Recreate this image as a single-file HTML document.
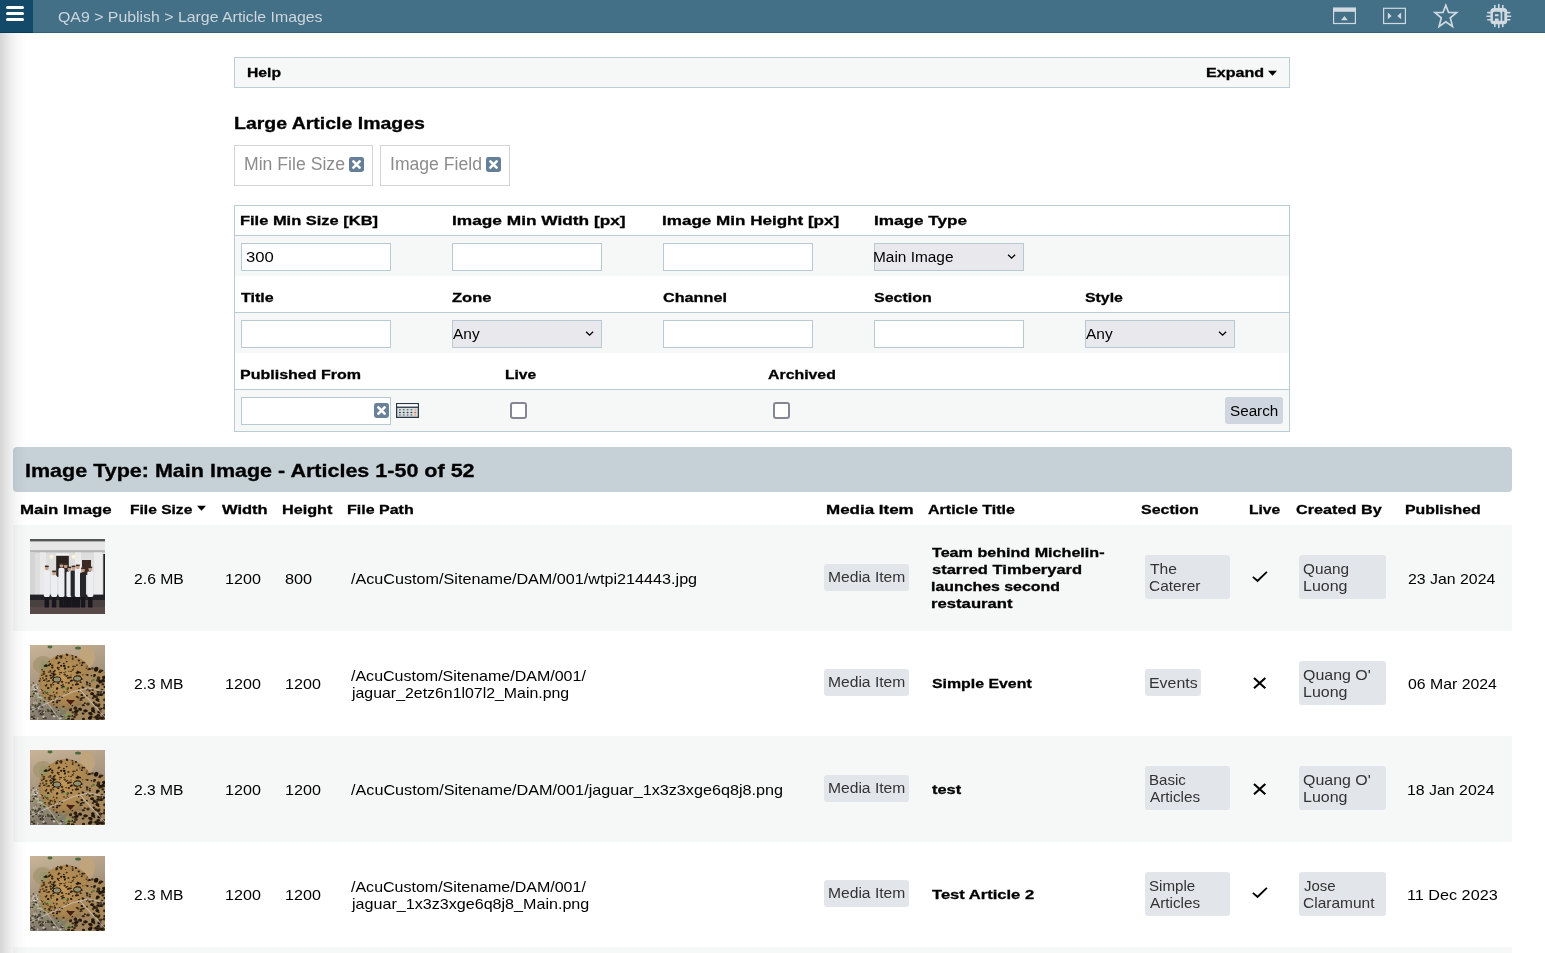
<!DOCTYPE html>
<html><head><meta charset="utf-8"><style>
html,body{margin:0;padding:0;}
body{width:1545px;height:953px;overflow:hidden;position:relative;background:#fff;font-family:"Liberation Sans", sans-serif;}
.t{position:absolute;white-space:nowrap;font-family:"Liberation Sans", sans-serif;transform-origin:0 0;}
</style></head><body>
<svg width="0" height="0" style="position:absolute"><defs><symbol id="leo" viewBox="0 0 75 75"><defs><filter id="lb0" x="-5%" y="-5%" width="110%" height="110%"><feGaussianBlur stdDeviation="0.7"/></filter><linearGradient id="bg0" x1="0" y1="0" x2="0.3" y2="1"><stop offset="0" stop-color="#cbb699"/><stop offset="0.5" stop-color="#a99780"/><stop offset="1" stop-color="#7c7468"/></linearGradient><radialGradient id="lg0" cx="0.45" cy="0.42" r="0.6"><stop offset="0" stop-color="#c09658"/><stop offset="0.75" stop-color="#a98550"/><stop offset="1" stop-color="#8f7552"/></radialGradient></defs><g filter="url(#lb0)"><rect x="-2" y="-2" width="79" height="79" fill="url(#bg0)"/><ellipse cx="13" cy="20" rx="10" ry="9" fill="#a89874"/><ellipse cx="57" cy="12" rx="8" ry="11" fill="#bfa47c"/><ellipse cx="36" cy="37" rx="27" ry="28" fill="url(#lg0)"/><ellipse cx="66" cy="52" rx="15" ry="30" fill="#a98a5c"/><ellipse cx="55" cy="70" rx="20" ry="10" fill="#a0855e"/><ellipse cx="14" cy="21" rx="5" ry="5" fill="#8e9668" opacity="0.55"/><ellipse cx="33.9" cy="42.0" rx="1.25" ry="1.00" fill="#1e140a" opacity="0.84"/><ellipse cx="38.4" cy="47.2" rx="0.67" ry="0.53" fill="#1e140a" opacity="0.79"/><ellipse cx="7.6" cy="58.9" rx="1.48" ry="1.19" fill="#c8c0b0" opacity="0.85"/><ellipse cx="7.4" cy="61.2" rx="0.74" ry="0.59" fill="#2e281e" opacity="0.85"/><ellipse cx="3.1" cy="67.1" rx="0.89" ry="0.71" fill="#6f8a52" opacity="0.85"/><ellipse cx="2.8" cy="66.5" rx="1.05" ry="0.84" fill="#3a3428" opacity="0.85"/><ellipse cx="34.3" cy="20.9" rx="1.30" ry="1.04" fill="#1e140a" opacity="1.00"/><ellipse cx="63.0" cy="53.1" rx="1.35" ry="1.08" fill="#1e140a" opacity="0.77"/><ellipse cx="57.5" cy="30.0" rx="1.19" ry="0.95" fill="#1e140a" opacity="0.82"/><ellipse cx="71.9" cy="63.5" rx="1.00" ry="0.80" fill="#1e140a" opacity="0.76"/><ellipse cx="68.3" cy="35.2" rx="2.08" ry="1.66" fill="#1e140a" opacity="0.82"/><ellipse cx="6.6" cy="46.3" rx="0.68" ry="0.54" fill="#2e281e" opacity="0.85"/><ellipse cx="3.5" cy="46.8" rx="1.43" ry="1.14" fill="#d8d2c8" opacity="0.85"/><ellipse cx="3.2" cy="60.0" rx="1.00" ry="0.80" fill="#6f8a52" opacity="0.85"/><ellipse cx="6.4" cy="60.9" rx="0.98" ry="0.78" fill="#8aa060" opacity="0.85"/><ellipse cx="16.0" cy="20.2" rx="1.28" ry="1.02" fill="#1e140a" opacity="0.94"/><ellipse cx="21.7" cy="65.9" rx="1.37" ry="1.10" fill="#3a3428" opacity="0.85"/><ellipse cx="21.0" cy="65.0" rx="1.00" ry="0.80" fill="#2e281e" opacity="0.85"/><ellipse cx="58.0" cy="24.7" rx="0.81" ry="0.65" fill="#1e140a" opacity="0.72"/><ellipse cx="5.7" cy="44.1" rx="0.93" ry="0.75" fill="#c8c0b0" opacity="0.85"/><ellipse cx="5.3" cy="44.1" rx="1.35" ry="1.08" fill="#d8d2c8" opacity="0.85"/><ellipse cx="12.8" cy="67.1" rx="0.77" ry="0.62" fill="#6f8a52" opacity="0.85"/><ellipse cx="12.3" cy="67.7" rx="1.03" ry="0.83" fill="#3a3428" opacity="0.85"/><ellipse cx="1.9" cy="73.0" rx="0.83" ry="0.67" fill="#c8c0b0" opacity="0.85"/><ellipse cx="2.1" cy="70.9" rx="1.25" ry="1.00" fill="#3a3428" opacity="0.85"/><ellipse cx="9.5" cy="35.9" rx="1.06" ry="0.85" fill="#1e140a" opacity="0.88"/><ellipse cx="68.6" cy="56.2" rx="1.08" ry="0.86" fill="#1e140a" opacity="0.82"/><ellipse cx="21.1" cy="39.8" rx="1.28" ry="1.02" fill="#1e140a" opacity="0.73"/><ellipse cx="10.4" cy="33.8" rx="0.83" ry="0.67" fill="#1e140a" opacity="0.92"/><ellipse cx="39.1" cy="71.0" rx="1.65" ry="1.32" fill="#1e140a" opacity="0.98"/><ellipse cx="35.6" cy="26.8" rx="0.82" ry="0.65" fill="#1e140a" opacity="0.71"/><ellipse cx="34.0" cy="27.6" rx="0.63" ry="0.50" fill="#1e140a" opacity="0.98"/><ellipse cx="72.3" cy="25.6" rx="1.09" ry="0.87" fill="#1e140a" opacity="0.84"/><ellipse cx="7.6" cy="62.4" rx="1.05" ry="0.84" fill="#2e281e" opacity="0.85"/><ellipse cx="6.3" cy="63.8" rx="1.12" ry="0.90" fill="#3a3428" opacity="0.85"/><ellipse cx="8.0" cy="49.5" rx="1.26" ry="1.00" fill="#8aa060" opacity="0.85"/><ellipse cx="7.8" cy="48.7" rx="1.01" ry="0.81" fill="#c8c0b0" opacity="0.85"/><ellipse cx="45.1" cy="36.1" rx="0.76" ry="0.61" fill="#1e140a" opacity="0.91"/><ellipse cx="37.3" cy="46.1" rx="0.78" ry="0.62" fill="#1e140a" opacity="0.70"/><ellipse cx="22.6" cy="50.9" rx="0.74" ry="0.59" fill="#1e140a" opacity="0.75"/><ellipse cx="67.9" cy="49.5" rx="1.49" ry="1.19" fill="#1e140a" opacity="0.97"/><ellipse cx="24.5" cy="49.9" rx="0.74" ry="0.59" fill="#1e140a" opacity="0.83"/><ellipse cx="60.4" cy="68.6" rx="1.97" ry="1.57" fill="#1e140a" opacity="0.82"/><ellipse cx="43.7" cy="23.7" rx="0.70" ry="0.56" fill="#1e140a" opacity="0.85"/><ellipse cx="62.8" cy="63.7" rx="1.78" ry="1.43" fill="#1e140a" opacity="0.99"/><ellipse cx="33.8" cy="20.6" rx="0.75" ry="0.60" fill="#1e140a" opacity="0.82"/><ellipse cx="46.9" cy="37.0" rx="0.82" ry="0.66" fill="#1e140a" opacity="0.95"/><ellipse cx="73.7" cy="33.9" rx="1.08" ry="0.87" fill="#1e140a" opacity="0.71"/><ellipse cx="53.1" cy="42.8" rx="0.82" ry="0.65" fill="#1e140a" opacity="0.94"/><ellipse cx="47.2" cy="33.5" rx="1.04" ry="0.83" fill="#1e140a" opacity="0.90"/><ellipse cx="60.6" cy="71.9" rx="1.75" ry="1.40" fill="#1e140a" opacity="0.76"/><ellipse cx="35.6" cy="13.4" rx="0.61" ry="0.49" fill="#1e140a" opacity="0.84"/><ellipse cx="20.4" cy="25.9" rx="1.09" ry="0.87" fill="#1e140a" opacity="0.86"/><ellipse cx="59.4" cy="68.0" rx="1.10" ry="0.88" fill="#1e140a" opacity="0.98"/><ellipse cx="34.0" cy="46.9" rx="0.86" ry="0.69" fill="#1e140a" opacity="0.87"/><ellipse cx="65.9" cy="59.8" rx="2.04" ry="1.63" fill="#1e140a" opacity="0.84"/><ellipse cx="48.8" cy="15.4" rx="1.11" ry="0.88" fill="#1e140a" opacity="0.95"/><ellipse cx="67.5" cy="73.5" rx="2.08" ry="1.66" fill="#1e140a" opacity="0.86"/><ellipse cx="59.3" cy="24.0" rx="1.24" ry="0.99" fill="#1e140a" opacity="0.96"/><ellipse cx="33.1" cy="41.3" rx="1.14" ry="0.91" fill="#1e140a" opacity="0.85"/><ellipse cx="0.4" cy="61.9" rx="0.76" ry="0.60" fill="#2e281e" opacity="0.85"/><ellipse cx="2.9" cy="62.3" rx="1.02" ry="0.82" fill="#c8c0b0" opacity="0.85"/><ellipse cx="70.9" cy="36.9" rx="2.04" ry="1.64" fill="#1e140a" opacity="0.73"/><ellipse cx="16.6" cy="39.5" rx="0.80" ry="0.64" fill="#1e140a" opacity="0.92"/><ellipse cx="47.9" cy="39.2" rx="1.19" ry="0.95" fill="#1e140a" opacity="0.87"/><ellipse cx="23.4" cy="28.6" rx="1.19" ry="0.95" fill="#1e140a" opacity="0.97"/><ellipse cx="17.5" cy="63.9" rx="1.12" ry="0.89" fill="#6f8a52" opacity="0.85"/><ellipse cx="15.3" cy="62.3" rx="0.60" ry="0.48" fill="#8aa060" opacity="0.85"/><ellipse cx="2.1" cy="72.3" rx="1.32" ry="1.06" fill="#3a3428" opacity="0.85"/><ellipse cx="2.0" cy="73.5" rx="0.66" ry="0.53" fill="#c8c0b0" opacity="0.85"/><ellipse cx="32.7" cy="70.8" rx="1.03" ry="0.82" fill="#d8d2c8" opacity="0.85"/><ellipse cx="30.4" cy="73.4" rx="1.44" ry="1.15" fill="#c8c0b0" opacity="0.85"/><ellipse cx="19.5" cy="52.7" rx="1.28" ry="1.03" fill="#1e140a" opacity="0.71"/><ellipse cx="21.3" cy="54.3" rx="0.77" ry="0.62" fill="#1e140a" opacity="0.85"/><ellipse cx="37.5" cy="43.7" rx="1.20" ry="0.96" fill="#1e140a" opacity="0.89"/><ellipse cx="53.8" cy="52.6" rx="1.22" ry="0.97" fill="#1e140a" opacity="0.71"/><ellipse cx="40.4" cy="64.8" rx="1.59" ry="1.27" fill="#1e140a" opacity="0.77"/><ellipse cx="16.2" cy="40.7" rx="1.01" ry="0.81" fill="#1e140a" opacity="0.74"/><ellipse cx="68.6" cy="47.1" rx="1.38" ry="1.11" fill="#1e140a" opacity="0.75"/><ellipse cx="45.2" cy="66.8" rx="1.21" ry="0.97" fill="#1e140a" opacity="0.93"/><ellipse cx="32.8" cy="71.4" rx="0.78" ry="0.62" fill="#2e281e" opacity="0.85"/><ellipse cx="31.0" cy="70.9" rx="0.92" ry="0.74" fill="#2e281e" opacity="0.85"/><ellipse cx="56.9" cy="37.7" rx="1.08" ry="0.86" fill="#1e140a" opacity="0.76"/><ellipse cx="2.9" cy="41.7" rx="0.73" ry="0.59" fill="#d8d2c8" opacity="0.85"/><ellipse cx="1.3" cy="40.1" rx="0.74" ry="0.59" fill="#5a5040" opacity="0.85"/><ellipse cx="4.5" cy="72.4" rx="0.89" ry="0.72" fill="#c8c0b0" opacity="0.85"/><ellipse cx="4.4" cy="70.8" rx="0.79" ry="0.63" fill="#2e281e" opacity="0.85"/><ellipse cx="2.4" cy="51.3" rx="1.01" ry="0.81" fill="#2e281e" opacity="0.85"/><ellipse cx="0.6" cy="51.4" rx="0.75" ry="0.60" fill="#2e281e" opacity="0.85"/><ellipse cx="63.1" cy="65.7" rx="2.00" ry="1.60" fill="#1e140a" opacity="0.98"/><ellipse cx="42.7" cy="14.3" rx="1.01" ry="0.81" fill="#1e140a" opacity="0.80"/><ellipse cx="57.2" cy="21.0" rx="0.68" ry="0.55" fill="#1e140a" opacity="0.92"/><ellipse cx="10.5" cy="69.4" rx="1.08" ry="0.87" fill="#2e281e" opacity="0.85"/><ellipse cx="13.1" cy="71.1" rx="0.97" ry="0.77" fill="#d8d2c8" opacity="0.85"/><ellipse cx="26.7" cy="47.9" rx="1.04" ry="0.83" fill="#1e140a" opacity="0.77"/><ellipse cx="70.9" cy="50.0" rx="1.37" ry="1.10" fill="#1e140a" opacity="0.90"/><ellipse cx="42.7" cy="40.0" rx="0.87" ry="0.70" fill="#1e140a" opacity="1.00"/><ellipse cx="48.2" cy="52.6" rx="1.29" ry="1.03" fill="#1e140a" opacity="0.71"/><ellipse cx="14.7" cy="28.2" rx="0.67" ry="0.54" fill="#1e140a" opacity="0.78"/><ellipse cx="67.9" cy="41.3" rx="1.56" ry="1.25" fill="#1e140a" opacity="0.99"/><ellipse cx="42.6" cy="74.6" rx="1.70" ry="1.36" fill="#1e140a" opacity="0.94"/><ellipse cx="6.8" cy="43.0" rx="1.44" ry="1.15" fill="#d8d2c8" opacity="0.85"/><ellipse cx="5.3" cy="46.7" rx="1.37" ry="1.10" fill="#2e281e" opacity="0.85"/><ellipse cx="32.2" cy="37.1" rx="0.80" ry="0.64" fill="#1e140a" opacity="0.82"/><ellipse cx="23.4" cy="39.8" rx="0.94" ry="0.75" fill="#1e140a" opacity="0.78"/><ellipse cx="69.7" cy="49.8" rx="1.82" ry="1.46" fill="#1e140a" opacity="0.71"/><ellipse cx="57.9" cy="43.9" rx="1.04" ry="0.83" fill="#1e140a" opacity="0.82"/><ellipse cx="23.6" cy="29.8" rx="1.01" ry="0.81" fill="#1e140a" opacity="0.92"/><ellipse cx="23.9" cy="59.8" rx="0.76" ry="0.61" fill="#1e140a" opacity="0.92"/><ellipse cx="18.8" cy="56.7" rx="0.63" ry="0.51" fill="#1e140a" opacity="0.73"/><ellipse cx="60.8" cy="68.2" rx="1.16" ry="0.93" fill="#1e140a" opacity="0.99"/><ellipse cx="18.4" cy="53.0" rx="0.64" ry="0.51" fill="#1e140a" opacity="0.83"/><ellipse cx="8.3" cy="63.2" rx="0.93" ry="0.74" fill="#d8d2c8" opacity="0.85"/><ellipse cx="9.5" cy="64.4" rx="0.84" ry="0.67" fill="#8aa060" opacity="0.85"/><ellipse cx="27.3" cy="55.8" rx="1.17" ry="0.94" fill="#1e140a" opacity="0.74"/><ellipse cx="36.1" cy="37.7" rx="0.82" ry="0.65" fill="#1e140a" opacity="0.85"/><ellipse cx="14.3" cy="20.9" rx="0.77" ry="0.61" fill="#1e140a" opacity="0.99"/><ellipse cx="51.2" cy="47.1" rx="0.61" ry="0.49" fill="#1e140a" opacity="0.78"/><ellipse cx="16.7" cy="20.9" rx="1.13" ry="0.90" fill="#1e140a" opacity="0.97"/><ellipse cx="73.6" cy="36.3" rx="1.39" ry="1.11" fill="#1e140a" opacity="0.80"/><ellipse cx="37.1" cy="10.0" rx="1.21" ry="0.97" fill="#1e140a" opacity="0.94"/><ellipse cx="33.5" cy="61.7" rx="1.14" ry="0.91" fill="#1e140a" opacity="0.83"/><ellipse cx="56.0" cy="29.3" rx="0.71" ry="0.56" fill="#1e140a" opacity="0.75"/><ellipse cx="62.7" cy="44.7" rx="1.32" ry="1.06" fill="#1e140a" opacity="0.93"/><ellipse cx="49.0" cy="43.5" rx="0.92" ry="0.74" fill="#1e140a" opacity="0.80"/><ellipse cx="40.8" cy="32.4" rx="1.00" ry="0.80" fill="#1e140a" opacity="0.94"/><ellipse cx="23.7" cy="69.1" rx="1.05" ry="0.84" fill="#2e281e" opacity="0.85"/><ellipse cx="22.4" cy="66.9" rx="0.92" ry="0.74" fill="#2e281e" opacity="0.85"/><ellipse cx="53.2" cy="42.7" rx="1.24" ry="0.99" fill="#1e140a" opacity="0.98"/><ellipse cx="68.5" cy="32.8" rx="1.88" ry="1.51" fill="#1e140a" opacity="0.79"/><ellipse cx="23.8" cy="30.0" rx="1.25" ry="1.00" fill="#1e140a" opacity="0.97"/><ellipse cx="18.6" cy="27.1" rx="0.86" ry="0.68" fill="#1e140a" opacity="0.81"/><ellipse cx="29.7" cy="29.1" rx="0.74" ry="0.59" fill="#1e140a" opacity="0.87"/><ellipse cx="59.8" cy="40.5" rx="1.19" ry="0.95" fill="#1e140a" opacity="0.87"/><ellipse cx="14.8" cy="56.0" rx="0.62" ry="0.50" fill="#2e281e" opacity="0.85"/><ellipse cx="13.4" cy="57.2" rx="1.47" ry="1.18" fill="#8aa060" opacity="0.85"/><ellipse cx="6.0" cy="39.3" rx="0.67" ry="0.54" fill="#3a3428" opacity="0.85"/><ellipse cx="6.4" cy="39.4" rx="1.17" ry="0.94" fill="#d8d2c8" opacity="0.85"/><ellipse cx="7.0" cy="62.1" rx="1.04" ry="0.83" fill="#2e281e" opacity="0.85"/><ellipse cx="8.4" cy="60.8" rx="0.90" ry="0.72" fill="#2e281e" opacity="0.85"/><ellipse cx="50.4" cy="37.0" rx="0.98" ry="0.78" fill="#1e140a" opacity="0.92"/><ellipse cx="53.1" cy="68.6" rx="1.45" ry="1.16" fill="#1e140a" opacity="0.95"/><ellipse cx="50.0" cy="64.0" rx="1.89" ry="1.51" fill="#1e140a" opacity="0.95"/><ellipse cx="66.6" cy="71.8" rx="1.70" ry="1.36" fill="#1e140a" opacity="0.86"/><ellipse cx="53.3" cy="60.2" rx="1.46" ry="1.17" fill="#1e140a" opacity="0.83"/><ellipse cx="12.9" cy="55.1" rx="0.75" ry="0.60" fill="#6f8a52" opacity="0.85"/><ellipse cx="10.5" cy="55.7" rx="0.85" ry="0.68" fill="#2e281e" opacity="0.85"/><ellipse cx="13.3" cy="70.0" rx="0.62" ry="0.49" fill="#c8c0b0" opacity="0.85"/><ellipse cx="13.3" cy="67.1" rx="0.70" ry="0.56" fill="#d8d2c8" opacity="0.85"/><ellipse cx="26.9" cy="44.1" rx="1.02" ry="0.82" fill="#1e140a" opacity="0.84"/><ellipse cx="38.1" cy="33.1" rx="1.23" ry="0.98" fill="#1e140a" opacity="0.82"/><ellipse cx="68.3" cy="70.3" rx="1.69" ry="1.35" fill="#1e140a" opacity="0.98"/><ellipse cx="41.3" cy="64.0" rx="0.94" ry="0.75" fill="#1e140a" opacity="0.82"/><ellipse cx="71.7" cy="49.5" rx="1.85" ry="1.48" fill="#1e140a" opacity="0.73"/><ellipse cx="64.7" cy="30.0" rx="1.24" ry="0.99" fill="#1e140a" opacity="0.74"/><ellipse cx="59.9" cy="73.2" rx="1.87" ry="1.50" fill="#1e140a" opacity="0.93"/><ellipse cx="69.3" cy="66.9" rx="1.96" ry="1.57" fill="#1e140a" opacity="0.97"/><ellipse cx="33.8" cy="18.5" rx="0.90" ry="0.72" fill="#1e140a" opacity="0.96"/><ellipse cx="68.1" cy="60.8" rx="1.14" ry="0.92" fill="#1e140a" opacity="0.92"/><ellipse cx="46.5" cy="38.7" rx="0.64" ry="0.51" fill="#1e140a" opacity="0.87"/><ellipse cx="46.1" cy="39.6" rx="1.22" ry="0.98" fill="#1e140a" opacity="0.91"/><ellipse cx="6.4" cy="56.2" rx="0.62" ry="0.49" fill="#6f8a52" opacity="0.85"/><ellipse cx="5.9" cy="57.8" rx="0.68" ry="0.55" fill="#c8c0b0" opacity="0.85"/><ellipse cx="15.6" cy="40.8" rx="0.97" ry="0.77" fill="#1e140a" opacity="0.75"/><ellipse cx="62.4" cy="23.4" rx="1.34" ry="1.07" fill="#1e140a" opacity="0.72"/><ellipse cx="22.9" cy="35.0" rx="1.10" ry="0.88" fill="#1e140a" opacity="0.81"/><ellipse cx="29.6" cy="34.6" rx="1.28" ry="1.02" fill="#1e140a" opacity="0.95"/><ellipse cx="28.3" cy="53.3" rx="0.77" ry="0.61" fill="#1e140a" opacity="0.87"/><ellipse cx="74.4" cy="60.0" rx="1.23" ry="0.98" fill="#1e140a" opacity="0.88"/><ellipse cx="21.8" cy="28.2" rx="0.98" ry="0.78" fill="#1e140a" opacity="0.79"/><ellipse cx="25.3" cy="29.4" rx="1.07" ry="0.85" fill="#1e140a" opacity="0.78"/><ellipse cx="14.3" cy="56.6" rx="1.11" ry="0.89" fill="#2e281e" opacity="0.85"/><ellipse cx="14.8" cy="54.4" rx="0.69" ry="0.55" fill="#3a3428" opacity="0.85"/><ellipse cx="8.6" cy="46.1" rx="0.63" ry="0.51" fill="#c8c0b0" opacity="0.85"/><ellipse cx="10.2" cy="45.6" rx="0.80" ry="0.64" fill="#d8d2c8" opacity="0.85"/><ellipse cx="74.1" cy="32.5" rx="1.85" ry="1.48" fill="#1e140a" opacity="0.80"/><ellipse cx="61.7" cy="69.5" rx="1.15" ry="0.92" fill="#1e140a" opacity="0.76"/><ellipse cx="11.0" cy="53.5" rx="1.16" ry="0.93" fill="#8aa060" opacity="0.85"/><ellipse cx="11.6" cy="51.1" rx="1.31" ry="1.05" fill="#6f8a52" opacity="0.85"/><ellipse cx="24.8" cy="25.7" rx="1.06" ry="0.84" fill="#1e140a" opacity="0.73"/><ellipse cx="28.3" cy="38.2" rx="1.15" ry="0.92" fill="#1e140a" opacity="0.95"/><ellipse cx="45.9" cy="11.9" rx="1.14" ry="0.91" fill="#1e140a" opacity="0.97"/><ellipse cx="41.1" cy="26.4" rx="0.95" ry="0.76" fill="#1e140a" opacity="0.74"/><ellipse cx="53.5" cy="74.0" rx="1.57" ry="1.25" fill="#1e140a" opacity="0.91"/><ellipse cx="70.9" cy="47.0" rx="1.22" ry="0.97" fill="#1e140a" opacity="0.72"/><ellipse cx="18.3" cy="43.2" rx="1.09" ry="0.87" fill="#1e140a" opacity="0.80"/><ellipse cx="69.7" cy="27.1" rx="1.51" ry="1.21" fill="#1e140a" opacity="0.74"/><ellipse cx="67.8" cy="40.8" rx="1.62" ry="1.29" fill="#1e140a" opacity="0.87"/><ellipse cx="21.8" cy="69.5" rx="1.14" ry="0.91" fill="#3a3428" opacity="0.85"/><ellipse cx="21.6" cy="66.2" rx="1.22" ry="0.97" fill="#2e281e" opacity="0.85"/><ellipse cx="18.1" cy="43.0" rx="1.18" ry="0.95" fill="#1e140a" opacity="0.76"/><ellipse cx="74.0" cy="70.5" rx="1.72" ry="1.38" fill="#1e140a" opacity="0.79"/><ellipse cx="50.3" cy="55.3" rx="0.87" ry="0.69" fill="#1e140a" opacity="0.88"/><ellipse cx="15.0" cy="35.1" rx="0.70" ry="0.56" fill="#1e140a" opacity="0.82"/><ellipse cx="42.7" cy="13.0" rx="0.96" ry="0.77" fill="#1e140a" opacity="0.78"/><ellipse cx="42.6" cy="24.9" rx="1.05" ry="0.84" fill="#1e140a" opacity="0.71"/><ellipse cx="71.9" cy="45.0" rx="1.52" ry="1.21" fill="#1e140a" opacity="0.82"/><ellipse cx="46.8" cy="51.7" rx="1.13" ry="0.90" fill="#1e140a" opacity="0.85"/><ellipse cx="74.6" cy="62.9" rx="1.94" ry="1.55" fill="#1e140a" opacity="0.82"/><ellipse cx="32.5" cy="42.4" rx="1.23" ry="0.99" fill="#1e140a" opacity="0.86"/><ellipse cx="39.4" cy="32.4" rx="1.23" ry="0.99" fill="#1e140a" opacity="0.80"/><ellipse cx="5.7" cy="55.3" rx="1.14" ry="0.91" fill="#5a5040" opacity="0.85"/><ellipse cx="5.6" cy="55.9" rx="0.82" ry="0.66" fill="#c8c0b0" opacity="0.85"/><ellipse cx="20.1" cy="65.4" rx="0.69" ry="0.56" fill="#6f8a52" opacity="0.85"/><ellipse cx="18.4" cy="66.1" rx="1.45" ry="1.16" fill="#3a3428" opacity="0.85"/><ellipse cx="74.9" cy="54.8" rx="1.96" ry="1.57" fill="#1e140a" opacity="0.81"/><ellipse cx="41.0" cy="42.3" rx="0.71" ry="0.57" fill="#1e140a" opacity="0.89"/><ellipse cx="3.9" cy="40.5" rx="1.12" ry="0.89" fill="#c8c0b0" opacity="0.85"/><ellipse cx="3.4" cy="37.9" rx="0.87" ry="0.70" fill="#2e281e" opacity="0.85"/><ellipse cx="12.9" cy="33.1" rx="0.92" ry="0.73" fill="#1e140a" opacity="0.86"/><ellipse cx="9.5" cy="51.1" rx="1.01" ry="0.81" fill="#2e281e" opacity="0.85"/><ellipse cx="9.8" cy="51.9" rx="1.44" ry="1.15" fill="#c8c0b0" opacity="0.85"/><ellipse cx="64.4" cy="51.9" rx="1.06" ry="0.85" fill="#1e140a" opacity="0.79"/><ellipse cx="64.4" cy="67.4" rx="1.02" ry="0.81" fill="#1e140a" opacity="0.89"/><ellipse cx="52.3" cy="42.0" rx="0.97" ry="0.78" fill="#1e140a" opacity="0.77"/><ellipse cx="71.2" cy="73.2" rx="1.72" ry="1.37" fill="#1e140a" opacity="0.79"/><ellipse cx="61.3" cy="72.1" rx="1.30" ry="1.04" fill="#1e140a" opacity="0.83"/><ellipse cx="65.9" cy="25.1" rx="2.05" ry="1.64" fill="#1e140a" opacity="0.93"/><ellipse cx="31.1" cy="12.7" rx="1.20" ry="0.96" fill="#1e140a" opacity="0.74"/><ellipse cx="51.8" cy="20.2" rx="1.10" ry="0.88" fill="#1e140a" opacity="0.85"/><ellipse cx="22.2" cy="20.5" rx="1.16" ry="0.93" fill="#1e140a" opacity="0.86"/><ellipse cx="10.6" cy="40.3" rx="0.76" ry="0.61" fill="#6f8a52" opacity="0.85"/><ellipse cx="7.8" cy="39.3" rx="0.68" ry="0.54" fill="#3a3428" opacity="0.85"/><ellipse cx="33.0" cy="39.6" rx="0.97" ry="0.78" fill="#1e140a" opacity="0.71"/><ellipse cx="45.0" cy="21.3" rx="0.78" ry="0.62" fill="#1e140a" opacity="0.94"/><ellipse cx="20.9" cy="41.1" rx="0.73" ry="0.58" fill="#1e140a" opacity="0.97"/><ellipse cx="69.7" cy="37.5" rx="1.20" ry="0.96" fill="#1e140a" opacity="0.87"/><ellipse cx="48.4" cy="27.0" rx="1.06" ry="0.85" fill="#1e140a" opacity="0.93"/><ellipse cx="38.8" cy="37.9" rx="1.19" ry="0.95" fill="#1e140a" opacity="0.91"/><ellipse cx="39.0" cy="71.4" rx="1.19" ry="0.95" fill="#1e140a" opacity="0.93"/><ellipse cx="12.4" cy="45.6" rx="0.76" ry="0.61" fill="#1e140a" opacity="0.83"/><ellipse cx="58.0" cy="59.0" rx="1.87" ry="1.50" fill="#1e140a" opacity="0.77"/><ellipse cx="36.7" cy="16.6" rx="1.01" ry="0.80" fill="#1e140a" opacity="0.85"/><ellipse cx="3.5" cy="45.1" rx="1.39" ry="1.11" fill="#d8d2c8" opacity="0.85"/><ellipse cx="2.0" cy="45.2" rx="1.15" ry="0.92" fill="#8aa060" opacity="0.85"/><ellipse cx="37.8" cy="54.2" rx="0.62" ry="0.50" fill="#1e140a" opacity="0.73"/><ellipse cx="13.4" cy="48.0" rx="1.01" ry="0.80" fill="#1e140a" opacity="0.92"/><ellipse cx="31.9" cy="52.2" rx="1.12" ry="0.89" fill="#1e140a" opacity="0.93"/><ellipse cx="57.4" cy="37.4" rx="1.06" ry="0.84" fill="#1e140a" opacity="0.85"/><ellipse cx="28.4" cy="18.6" rx="0.95" ry="0.76" fill="#1e140a" opacity="0.90"/><ellipse cx="44.7" cy="34.1" rx="0.82" ry="0.66" fill="#1e140a" opacity="0.84"/><ellipse cx="52.4" cy="52.8" rx="1.27" ry="1.02" fill="#1e140a" opacity="0.74"/><ellipse cx="56.7" cy="45.1" rx="0.69" ry="0.56" fill="#1e140a" opacity="0.92"/><ellipse cx="39.1" cy="73.9" rx="1.00" ry="0.80" fill="#1e140a" opacity="0.82"/><ellipse cx="41.7" cy="35.4" rx="1.25" ry="1.00" fill="#1e140a" opacity="0.99"/><ellipse cx="51.0" cy="53.8" rx="1.28" ry="1.03" fill="#1e140a" opacity="0.88"/><ellipse cx="64.2" cy="31.4" rx="1.09" ry="0.88" fill="#1e140a" opacity="0.77"/><ellipse cx="24.9" cy="69.9" rx="0.74" ry="0.60" fill="#2e281e" opacity="0.85"/><ellipse cx="24.1" cy="71.3" rx="1.42" ry="1.14" fill="#d8d2c8" opacity="0.85"/><ellipse cx="34.7" cy="29.5" rx="1.19" ry="0.95" fill="#1e140a" opacity="0.81"/><ellipse cx="26.1" cy="13.8" rx="0.98" ry="0.79" fill="#1e140a" opacity="0.75"/><ellipse cx="35.1" cy="23.1" rx="0.91" ry="0.73" fill="#1e140a" opacity="1.00"/><ellipse cx="50.9" cy="64.7" rx="1.23" ry="0.98" fill="#1e140a" opacity="0.81"/><ellipse cx="4.9" cy="50.9" rx="0.62" ry="0.49" fill="#d8d2c8" opacity="0.85"/><ellipse cx="6.4" cy="51.9" rx="1.11" ry="0.89" fill="#6f8a52" opacity="0.85"/><ellipse cx="20.1" cy="27.1" rx="0.71" ry="0.57" fill="#1e140a" opacity="0.98"/><ellipse cx="27.0" cy="57.4" rx="1.11" ry="0.89" fill="#1e140a" opacity="0.97"/><ellipse cx="66.2" cy="24.4" rx="1.85" ry="1.48" fill="#1e140a" opacity="0.86"/><ellipse cx="11.3" cy="44.7" rx="0.62" ry="0.50" fill="#1e140a" opacity="0.79"/><ellipse cx="31.8" cy="40.8" rx="0.70" ry="0.56" fill="#1e140a" opacity="0.91"/><ellipse cx="19.5" cy="54.4" rx="1.07" ry="0.85" fill="#1e140a" opacity="0.74"/><ellipse cx="15.4" cy="21.0" rx="1.10" ry="0.88" fill="#1e140a" opacity="0.82"/><ellipse cx="27.9" cy="64.1" rx="0.91" ry="0.73" fill="#6f8a52" opacity="0.85"/><ellipse cx="27.5" cy="66.3" rx="1.27" ry="1.02" fill="#c8c0b0" opacity="0.85"/><ellipse cx="42.4" cy="60.7" rx="0.81" ry="0.65" fill="#1e140a" opacity="0.90"/><ellipse cx="51.7" cy="50.0" rx="1.27" ry="1.01" fill="#1e140a" opacity="0.96"/><ellipse cx="17.6" cy="47.4" rx="0.66" ry="0.53" fill="#1e140a" opacity="0.83"/><ellipse cx="28.8" cy="24.6" rx="0.95" ry="0.76" fill="#1e140a" opacity="0.78"/><ellipse cx="11.9" cy="30.2" rx="0.93" ry="0.75" fill="#1e140a" opacity="0.75"/><ellipse cx="49.9" cy="18.0" rx="0.67" ry="0.53" fill="#1e140a" opacity="0.80"/><ellipse cx="31.7" cy="11.3" rx="1.01" ry="0.81" fill="#1e140a" opacity="0.91"/><ellipse cx="29.4" cy="27.3" rx="0.64" ry="0.52" fill="#1e140a" opacity="0.82"/><ellipse cx="43.9" cy="35.2" rx="0.83" ry="0.66" fill="#1e140a" opacity="0.78"/><ellipse cx="66.9" cy="42.4" rx="1.29" ry="1.03" fill="#1e140a" opacity="0.90"/><ellipse cx="14.0" cy="35.2" rx="1.03" ry="0.82" fill="#1e140a" opacity="0.99"/><ellipse cx="27.2" cy="43.2" rx="1.26" ry="1.01" fill="#1e140a" opacity="0.93"/><ellipse cx="31.2" cy="20.7" rx="1.18" ry="0.94" fill="#1e140a" opacity="0.96"/><ellipse cx="26.8" cy="66.8" rx="1.06" ry="0.85" fill="#5a5040" opacity="0.85"/><ellipse cx="28.6" cy="68.1" rx="0.62" ry="0.50" fill="#6f8a52" opacity="0.85"/><ellipse cx="20.2" cy="19.4" rx="0.75" ry="0.60" fill="#1e140a" opacity="0.86"/><ellipse cx="69.5" cy="73.5" rx="1.00" ry="0.80" fill="#1e140a" opacity="0.86"/><ellipse cx="63.7" cy="57.4" rx="1.09" ry="0.87" fill="#1e140a" opacity="0.95"/><ellipse cx="66.3" cy="51.8" rx="1.88" ry="1.50" fill="#1e140a" opacity="0.78"/><ellipse cx="29.7" cy="11.7" rx="0.73" ry="0.59" fill="#1e140a" opacity="0.75"/><ellipse cx="25.0" cy="51.7" rx="1.16" ry="0.93" fill="#1e140a" opacity="0.79"/><ellipse cx="31.1" cy="27.5" rx="1.07" ry="0.85" fill="#1e140a" opacity="0.85"/><ellipse cx="48.5" cy="27.2" rx="1.09" ry="0.88" fill="#1e140a" opacity="0.98"/><ellipse cx="55.3" cy="65.8" rx="2.09" ry="1.67" fill="#1e140a" opacity="0.95"/><ellipse cx="66.4" cy="23.3" rx="1.93" ry="1.55" fill="#1e140a" opacity="0.85"/><ellipse cx="46.6" cy="31.0" rx="0.94" ry="0.75" fill="#1e140a" opacity="0.80"/><ellipse cx="29.8" cy="55.5" rx="1.09" ry="0.87" fill="#1e140a" opacity="0.78"/><ellipse cx="47.6" cy="27.6" rx="1.08" ry="0.86" fill="#1e140a" opacity="0.76"/><ellipse cx="73.8" cy="48.1" rx="1.14" ry="0.91" fill="#1e140a" opacity="0.92"/><ellipse cx="15.1" cy="46.6" rx="0.80" ry="0.64" fill="#1e140a" opacity="0.90"/><ellipse cx="73.0" cy="35.4" rx="1.76" ry="1.41" fill="#1e140a" opacity="0.94"/><ellipse cx="20.3" cy="18.9" rx="1.07" ry="0.85" fill="#1e140a" opacity="0.82"/><ellipse cx="13.3" cy="73.6" rx="0.92" ry="0.74" fill="#3a3428" opacity="0.85"/><ellipse cx="11.4" cy="76.4" rx="1.35" ry="1.08" fill="#c8c0b0" opacity="0.85"/><ellipse cx="33.5" cy="64.1" rx="1.25" ry="1.00" fill="#8aa060" opacity="0.85"/><ellipse cx="34.0" cy="67.2" rx="0.95" ry="0.76" fill="#6f8a52" opacity="0.85"/><ellipse cx="36.6" cy="9.0" rx="0.83" ry="0.66" fill="#1e140a" opacity="0.71"/><ellipse cx="42.4" cy="10.8" rx="1.04" ry="0.83" fill="#1e140a" opacity="0.78"/><ellipse cx="17.1" cy="36.2" rx="0.86" ry="0.68" fill="#1e140a" opacity="0.78"/><ellipse cx="66.9" cy="23.2" rx="1.09" ry="0.87" fill="#1e140a" opacity="0.75"/><ellipse cx="36.3" cy="74.8" rx="1.22" ry="0.98" fill="#1e140a" opacity="0.96"/><ellipse cx="36.3" cy="31.1" rx="1.16" ry="0.93" fill="#1e140a" opacity="0.82"/><ellipse cx="5.0" cy="41.8" rx="0.85" ry="0.68" fill="#5a5040" opacity="0.85"/><ellipse cx="5.8" cy="43.3" rx="1.00" ry="0.80" fill="#2e281e" opacity="0.85"/><ellipse cx="56.5" cy="23.3" rx="0.96" ry="0.77" fill="#1e140a" opacity="0.70"/><ellipse cx="13.8" cy="72.1" rx="1.33" ry="1.06" fill="#c8c0b0" opacity="0.85"/><ellipse cx="15.4" cy="73.2" rx="1.34" ry="1.08" fill="#3a3428" opacity="0.85"/><ellipse cx="70.2" cy="36.2" rx="1.92" ry="1.54" fill="#1e140a" opacity="0.82"/><ellipse cx="67.4" cy="46.8" rx="1.01" ry="0.81" fill="#1e140a" opacity="0.74"/><ellipse cx="24.3" cy="54.3" rx="0.95" ry="0.76" fill="#1e140a" opacity="0.78"/><ellipse cx="74.4" cy="47.0" rx="1.49" ry="1.20" fill="#1e140a" opacity="0.79"/><ellipse cx="5.4" cy="48.1" rx="0.79" ry="0.63" fill="#d8d2c8" opacity="0.85"/><ellipse cx="3.8" cy="50.0" rx="1.09" ry="0.87" fill="#6f8a52" opacity="0.85"/><ellipse cx="37.7" cy="30.3" rx="0.83" ry="0.66" fill="#1e140a" opacity="0.86"/><ellipse cx="66.0" cy="24.1" rx="1.83" ry="1.46" fill="#1e140a" opacity="0.73"/><ellipse cx="74.1" cy="32.3" rx="2.06" ry="1.65" fill="#1e140a" opacity="0.77"/><ellipse cx="20.5" cy="50.8" rx="1.26" ry="1.01" fill="#1e140a" opacity="0.80"/><ellipse cx="13.8" cy="26.8" rx="1.29" ry="1.03" fill="#1e140a" opacity="0.74"/><ellipse cx="47.6" cy="28.4" rx="1.05" ry="0.84" fill="#1e140a" opacity="0.76"/><ellipse cx="46.2" cy="66.6" rx="1.94" ry="1.55" fill="#1e140a" opacity="0.89"/><ellipse cx="37.9" cy="42.6" rx="0.68" ry="0.54" fill="#1e140a" opacity="0.95"/><ellipse cx="51.7" cy="34.0" rx="1.07" ry="0.85" fill="#1e140a" opacity="0.83"/><ellipse cx="28.8" cy="17.3" rx="1.02" ry="0.82" fill="#1e140a" opacity="0.87"/><ellipse cx="47.0" cy="33.5" rx="1.02" ry="0.81" fill="#1e140a" opacity="0.88"/><ellipse cx="36.1" cy="73.7" rx="1.26" ry="1.01" fill="#8aa060" opacity="0.85"/><ellipse cx="33.4" cy="76.3" rx="1.28" ry="1.02" fill="#c8c0b0" opacity="0.85"/><ellipse cx="69.3" cy="59.2" rx="1.16" ry="0.93" fill="#1e140a" opacity="0.73"/><ellipse cx="38.8" cy="26.2" rx="0.75" ry="0.60" fill="#1e140a" opacity="0.70"/><ellipse cx="32.0" cy="36.7" rx="1.27" ry="1.02" fill="#1e140a" opacity="0.77"/><ellipse cx="56.8" cy="65.8" rx="1.08" ry="0.86" fill="#1e140a" opacity="0.85"/><ellipse cx="6.1" cy="63.5" rx="1.45" ry="1.16" fill="#2e281e" opacity="0.85"/><ellipse cx="2.9" cy="64.6" rx="1.44" ry="1.15" fill="#6f8a52" opacity="0.85"/><ellipse cx="13.6" cy="29.1" rx="1.19" ry="0.96" fill="#1e140a" opacity="0.89"/><ellipse cx="47.2" cy="65.7" rx="1.80" ry="1.44" fill="#1e140a" opacity="0.76"/><ellipse cx="50.1" cy="32.3" rx="0.61" ry="0.49" fill="#1e140a" opacity="0.80"/><ellipse cx="23.6" cy="47.2" rx="0.79" ry="0.64" fill="#1e140a" opacity="0.88"/><ellipse cx="9.5" cy="50.5" rx="0.70" ry="0.56" fill="#2e281e" opacity="0.85"/><ellipse cx="10.0" cy="51.5" rx="0.78" ry="0.62" fill="#3a3428" opacity="0.85"/><ellipse cx="51.9" cy="55.2" rx="0.85" ry="0.68" fill="#1e140a" opacity="0.79"/><ellipse cx="30.6" cy="11.0" rx="1.04" ry="0.83" fill="#1e140a" opacity="0.83"/><ellipse cx="61.5" cy="30.7" rx="0.92" ry="0.74" fill="#1e140a" opacity="0.85"/><ellipse cx="70.6" cy="26.0" rx="1.77" ry="1.42" fill="#1e140a" opacity="0.77"/><ellipse cx="43.4" cy="21.4" rx="1.21" ry="0.97" fill="#1e140a" opacity="0.79"/><ellipse cx="64.1" cy="50.8" rx="1.50" ry="1.20" fill="#1e140a" opacity="0.98"/><ellipse cx="29.1" cy="55.7" rx="1.02" ry="0.82" fill="#1e140a" opacity="0.83"/><ellipse cx="21.1" cy="33.1" rx="1.27" ry="1.01" fill="#1e140a" opacity="0.79"/><ellipse cx="52.1" cy="50.4" rx="0.77" ry="0.62" fill="#1e140a" opacity="0.82"/><ellipse cx="8.9" cy="66.8" rx="0.91" ry="0.73" fill="#3a3428" opacity="0.85"/><ellipse cx="10.1" cy="65.6" rx="1.41" ry="1.13" fill="#3a3428" opacity="0.85"/><ellipse cx="3.1" cy="46.2" rx="1.33" ry="1.07" fill="#2e281e" opacity="0.85"/><ellipse cx="2.9" cy="42.9" rx="0.67" ry="0.53" fill="#d8d2c8" opacity="0.85"/><ellipse cx="34.9" cy="23.7" rx="1.07" ry="0.86" fill="#1e140a" opacity="0.88"/><ellipse cx="72.8" cy="73.2" rx="2.09" ry="1.67" fill="#1e140a" opacity="0.82"/><ellipse cx="62.2" cy="48.7" rx="1.77" ry="1.42" fill="#1e140a" opacity="1.00"/><ellipse cx="27.7" cy="10.7" rx="0.88" ry="0.70" fill="#1e140a" opacity="0.92"/><ellipse cx="48.7" cy="46.7" rx="0.78" ry="0.62" fill="#1e140a" opacity="0.94"/><ellipse cx="54.8" cy="58.2" rx="1.13" ry="0.91" fill="#1e140a" opacity="0.84"/><ellipse cx="3.0" cy="66.1" rx="0.62" ry="0.50" fill="#2e281e" opacity="0.85"/><ellipse cx="0.8" cy="64.7" rx="1.48" ry="1.18" fill="#3a3428" opacity="0.85"/><ellipse cx="22.6" cy="38.0" rx="0.69" ry="0.55" fill="#1e140a" opacity="0.87"/><ellipse cx="38.4" cy="22.0" rx="1.14" ry="0.92" fill="#1e140a" opacity="0.77"/><ellipse cx="16.3" cy="33.9" rx="0.99" ry="0.79" fill="#1e140a" opacity="0.84"/><ellipse cx="72.8" cy="39.4" rx="1.45" ry="1.16" fill="#1e140a" opacity="0.88"/><ellipse cx="64.8" cy="72.3" rx="1.45" ry="1.16" fill="#1e140a" opacity="0.70"/><ellipse cx="12.5" cy="62.2" rx="0.74" ry="0.59" fill="#2e281e" opacity="0.85"/><ellipse cx="11.2" cy="61.4" rx="1.42" ry="1.14" fill="#2e281e" opacity="0.85"/><ellipse cx="29.2" cy="22.5" rx="0.75" ry="0.60" fill="#1e140a" opacity="0.86"/><ellipse cx="49.3" cy="31.4" rx="1.23" ry="0.98" fill="#1e140a" opacity="0.76"/><ellipse cx="74.5" cy="42.0" rx="1.15" ry="0.92" fill="#1e140a" opacity="0.99"/><ellipse cx="46.9" cy="20.1" rx="1.02" ry="0.82" fill="#1e140a" opacity="0.77"/><ellipse cx="5.9" cy="60.0" rx="0.90" ry="0.72" fill="#3a3428" opacity="0.85"/><ellipse cx="4.5" cy="60.7" rx="0.66" ry="0.52" fill="#8aa060" opacity="0.85"/><ellipse cx="41.1" cy="30.0" rx="0.76" ry="0.60" fill="#1e140a" opacity="0.73"/><ellipse cx="27.9" cy="23.6" rx="0.94" ry="0.75" fill="#1e140a" opacity="0.77"/><ellipse cx="56.2" cy="36.6" rx="0.61" ry="0.49" fill="#1e140a" opacity="0.82"/><ellipse cx="44.5" cy="72.1" rx="1.40" ry="1.12" fill="#1e140a" opacity="0.88"/><ellipse cx="27.7" cy="22.6" rx="1.03" ry="0.82" fill="#1e140a" opacity="0.88"/><ellipse cx="23.6" cy="37.3" rx="0.96" ry="0.77" fill="#1e140a" opacity="0.93"/><ellipse cx="18.9" cy="20.3" rx="1.16" ry="0.93" fill="#1e140a" opacity="0.83"/><ellipse cx="64.5" cy="30.2" rx="1.31" ry="1.05" fill="#1e140a" opacity="0.90"/><ellipse cx="7.7" cy="73.1" rx="0.89" ry="0.71" fill="#d8d2c8" opacity="0.85"/><ellipse cx="7.6" cy="74.4" rx="0.65" ry="0.52" fill="#c8c0b0" opacity="0.85"/><ellipse cx="3.8" cy="48.6" rx="1.17" ry="0.94" fill="#2e281e" opacity="0.85"/><ellipse cx="4.1" cy="47.6" rx="0.79" ry="0.63" fill="#2e281e" opacity="0.85"/><ellipse cx="61.8" cy="35.9" rx="0.83" ry="0.67" fill="#1e140a" opacity="0.89"/><ellipse cx="68.5" cy="61.6" rx="1.19" ry="0.95" fill="#1e140a" opacity="0.73"/><ellipse cx="56.8" cy="50.8" rx="1.16" ry="0.93" fill="#1e140a" opacity="0.83"/><ellipse cx="67.3" cy="54.6" rx="1.92" ry="1.54" fill="#1e140a" opacity="0.99"/><ellipse cx="26.7" cy="62.4" rx="1.10" ry="0.88" fill="#1e140a" opacity="0.91"/><ellipse cx="29.8" cy="51.8" rx="1.06" ry="0.85" fill="#1e140a" opacity="0.73"/><ellipse cx="20.6" cy="30.6" rx="1.23" ry="0.98" fill="#1e140a" opacity="0.98"/><ellipse cx="15.0" cy="52.7" rx="0.95" ry="0.76" fill="#1e140a" opacity="0.83"/><ellipse cx="59.9" cy="38.4" rx="0.94" ry="0.75" fill="#1e140a" opacity="0.86"/><ellipse cx="64.1" cy="58.0" rx="1.36" ry="1.09" fill="#1e140a" opacity="0.70"/><ellipse cx="61.7" cy="48.9" rx="1.41" ry="1.13" fill="#1e140a" opacity="0.94"/><ellipse cx="51.3" cy="34.0" rx="1.01" ry="0.81" fill="#1e140a" opacity="0.84"/><ellipse cx="52.8" cy="29.7" rx="0.66" ry="0.53" fill="#1e140a" opacity="0.85"/><ellipse cx="47.4" cy="26.3" rx="0.89" ry="0.71" fill="#1e140a" opacity="0.71"/><ellipse cx="69.1" cy="60.2" rx="1.28" ry="1.02" fill="#1e140a" opacity="0.77"/><ellipse cx="14.3" cy="66.8" rx="0.97" ry="0.78" fill="#c8c0b0" opacity="0.85"/><ellipse cx="15.5" cy="66.6" rx="0.77" ry="0.61" fill="#3a3428" opacity="0.85"/><ellipse cx="51.0" cy="37.5" rx="0.71" ry="0.56" fill="#1e140a" opacity="1.00"/><ellipse cx="26.4" cy="12.0" rx="0.94" ry="0.75" fill="#1e140a" opacity="0.85"/><ellipse cx="32.9" cy="72.0" rx="0.82" ry="0.66" fill="#d8d2c8" opacity="0.85"/><ellipse cx="32.4" cy="71.6" rx="1.08" ry="0.87" fill="#2e281e" opacity="0.85"/><ellipse cx="9.4" cy="59.0" rx="1.43" ry="1.15" fill="#2e281e" opacity="0.85"/><ellipse cx="8.5" cy="59.2" rx="1.25" ry="1.00" fill="#5a5040" opacity="0.85"/><ellipse cx="45.6" cy="62.3" rx="1.29" ry="1.03" fill="#1e140a" opacity="0.73"/><ellipse cx="26.9" cy="12.9" rx="1.22" ry="0.98" fill="#1e140a" opacity="0.90"/><ellipse cx="21.5" cy="42.1" rx="0.78" ry="0.63" fill="#1e140a" opacity="0.72"/><ellipse cx="3.9" cy="58.1" rx="0.95" ry="0.76" fill="#d8d2c8" opacity="0.85"/><ellipse cx="2.6" cy="59.7" rx="1.26" ry="1.01" fill="#5a5040" opacity="0.85"/><ellipse cx="23.0" cy="32.0" rx="1.15" ry="0.92" fill="#1e140a" opacity="0.90"/><ellipse cx="40.7" cy="36.1" rx="1.08" ry="0.86" fill="#1e140a" opacity="0.80"/><ellipse cx="16.2" cy="48.0" rx="0.79" ry="0.63" fill="#1e140a" opacity="0.92"/><ellipse cx="41.2" cy="43.1" rx="1.25" ry="1.00" fill="#1e140a" opacity="0.92"/><ellipse cx="70.0" cy="72.1" rx="1.21" ry="0.97" fill="#1e140a" opacity="0.81"/><ellipse cx="71.2" cy="49.9" rx="1.15" ry="0.92" fill="#1e140a" opacity="0.82"/><ellipse cx="12.6" cy="69.5" rx="1.43" ry="1.14" fill="#3a3428" opacity="0.85"/><ellipse cx="10.5" cy="68.4" rx="0.68" ry="0.54" fill="#2e281e" opacity="0.85"/><ellipse cx="45.9" cy="69.4" rx="1.97" ry="1.57" fill="#1e140a" opacity="0.73"/><ellipse cx="70.5" cy="67.4" rx="1.10" ry="0.88" fill="#1e140a" opacity="0.97"/><ellipse cx="19.2" cy="16.5" rx="0.79" ry="0.63" fill="#1e140a" opacity="0.75"/><ellipse cx="40.6" cy="65.4" rx="1.17" ry="0.94" fill="#1e140a" opacity="0.83"/><ellipse cx="59.6" cy="45.7" rx="1.16" ry="0.93" fill="#1e140a" opacity="1.00"/><ellipse cx="42.9" cy="67.4" rx="1.35" ry="1.08" fill="#1e140a" opacity="0.75"/><ellipse cx="22.3" cy="22.6" rx="1.29" ry="1.03" fill="#1e140a" opacity="0.82"/><ellipse cx="45.4" cy="63.5" rx="1.84" ry="1.47" fill="#1e140a" opacity="0.90"/><ellipse cx="29.7" cy="17.4" rx="0.85" ry="0.68" fill="#1e140a" opacity="0.77"/><ellipse cx="28.4" cy="65.6" rx="0.93" ry="0.75" fill="#2e281e" opacity="0.85"/><ellipse cx="29.5" cy="66.8" rx="1.19" ry="0.95" fill="#8aa060" opacity="0.85"/><ellipse cx="19.0" cy="35.9" rx="1.15" ry="0.92" fill="#1e140a" opacity="0.80"/><ellipse cx="17.9" cy="49.1" rx="0.78" ry="0.63" fill="#1e140a" opacity="0.86"/><ellipse cx="17.9" cy="64.7" rx="0.87" ry="0.70" fill="#2e281e" opacity="0.85"/><ellipse cx="20.1" cy="64.6" rx="0.63" ry="0.50" fill="#6f8a52" opacity="0.85"/><ellipse cx="16.3" cy="31.1" rx="1.29" ry="1.03" fill="#1e140a" opacity="0.81"/><ellipse cx="28.7" cy="67.9" rx="0.72" ry="0.58" fill="#6f8a52" opacity="0.85"/><ellipse cx="26.1" cy="69.5" rx="0.94" ry="0.75" fill="#5a5040" opacity="0.85"/><ellipse cx="42.2" cy="70.8" rx="1.07" ry="0.86" fill="#1e140a" opacity="0.99"/><ellipse cx="2.2" cy="70.2" rx="0.66" ry="0.53" fill="#d8d2c8" opacity="0.85"/><ellipse cx="4.0" cy="73.4" rx="1.44" ry="1.15" fill="#2e281e" opacity="0.85"/><ellipse cx="60.3" cy="24.0" rx="1.05" ry="0.84" fill="#1e140a" opacity="0.77"/><ellipse cx="52.6" cy="17.8" rx="1.19" ry="0.96" fill="#1e140a" opacity="0.97"/><ellipse cx="50.1" cy="27.6" rx="1.11" ry="0.89" fill="#1e140a" opacity="0.98"/><ellipse cx="12.9" cy="66.2" rx="1.21" ry="0.97" fill="#3a3428" opacity="0.85"/><ellipse cx="10.2" cy="64.0" rx="0.71" ry="0.57" fill="#c8c0b0" opacity="0.85"/><ellipse cx="57.2" cy="39.5" rx="1.26" ry="1.01" fill="#1e140a" opacity="0.72"/><ellipse cx="23.2" cy="57.1" rx="1.25" ry="1.00" fill="#1e140a" opacity="0.85"/><ellipse cx="12.0" cy="24.8" rx="1.00" ry="0.80" fill="#1e140a" opacity="0.79"/><ellipse cx="59.5" cy="72.9" rx="1.51" ry="1.20" fill="#1e140a" opacity="0.88"/><ellipse cx="63.5" cy="34.9" rx="1.21" ry="0.97" fill="#1e140a" opacity="0.98"/><ellipse cx="57.2" cy="30.0" rx="0.64" ry="0.51" fill="#1e140a" opacity="0.75"/><ellipse cx="11.8" cy="53.3" rx="0.80" ry="0.64" fill="#c8c0b0" opacity="0.85"/><ellipse cx="13.4" cy="53.5" rx="0.62" ry="0.50" fill="#2e281e" opacity="0.85"/><ellipse cx="46.4" cy="27.7" rx="0.93" ry="0.74" fill="#1e140a" opacity="0.89"/><ellipse cx="23.8" cy="26.7" rx="1.22" ry="0.97" fill="#1e140a" opacity="0.87"/><ellipse cx="31.3" cy="40.5" rx="0.92" ry="0.74" fill="#1e140a" opacity="0.80"/><ellipse cx="70.2" cy="64.0" rx="1.97" ry="1.58" fill="#1e140a" opacity="0.75"/><ellipse cx="38.2" cy="73.8" rx="1.32" ry="1.05" fill="#1e140a" opacity="0.75"/><ellipse cx="54.3" cy="17.6" rx="1.01" ry="0.81" fill="#1e140a" opacity="0.75"/><ellipse cx="6.7" cy="51.8" rx="1.05" ry="0.84" fill="#8aa060" opacity="0.85"/><ellipse cx="8.0" cy="52.2" rx="0.96" ry="0.77" fill="#c8c0b0" opacity="0.85"/><ellipse cx="36.1" cy="48.1" rx="0.80" ry="0.64" fill="#1e140a" opacity="0.83"/><ellipse cx="5.3" cy="61.3" rx="1.32" ry="1.05" fill="#5a5040" opacity="0.85"/><ellipse cx="5.1" cy="60.5" rx="0.69" ry="0.55" fill="#2e281e" opacity="0.85"/><ellipse cx="27" cy="34.5" rx="3.4" ry="2.2" fill="#8f9070"/><ellipse cx="27" cy="34.5" rx="4" ry="2.7" fill="none" stroke="#1c140c" stroke-width="0.9"/><ellipse cx="47.5" cy="33.5" rx="3.4" ry="2.2" fill="#8f9070"/><ellipse cx="47.5" cy="33.5" rx="4" ry="2.7" fill="none" stroke="#1c140c" stroke-width="0.9"/><path d="M36 55 L45 55 L40.5 60 Z" fill="#4a1e16"/><path d="M0 66 L20 57 L42 47 L58 43 L75 46" fill="none" stroke="#d5d2d8" stroke-width="1.2" opacity="0.6"/><path d="M0 44 L16 56 L30 75" fill="none" stroke="#cbbf9e" stroke-width="1.1" opacity="0.6"/><path d="M50 45 L62 58 L75 72" fill="none" stroke="#d4d0d6" stroke-width="1.1" opacity="0.7"/><ellipse cx="18" cy="46" rx="3" ry="1.5" fill="#7da25a" opacity="0.6"/><ellipse cx="35" cy="43" rx="3" ry="1.3" fill="#7da25a" opacity="0.6"/><ellipse cx="63" cy="35" rx="2" ry="1.2" fill="#7da25a" opacity="0.6"/><ellipse cx="38" cy="70" rx="4" ry="1.5" fill="#7da25a" opacity="0.6"/><ellipse cx="48" cy="3" rx="3" ry="1.6" fill="#2f5a2a" opacity="0.8"/><ellipse cx="20" cy="2" rx="2.5" ry="1.4" fill="#2f5a2a" opacity="0.8"/></g></symbol></defs></svg>
<div style="position:absolute;left:0px;top:0px;width:1545px;height:33px;background:#436f87;"></div>
<div style="position:absolute;left:0px;top:32px;width:1545px;height:1px;background:#32607a;"></div>
<div style="position:absolute;left:0px;top:0px;width:33px;height:33px;background:#134a6a;"></div>
<div style="position:absolute;left:0px;top:32px;width:33px;height:1px;background:#063b5b;"></div>
<div style="position:absolute;left:6px;top:6px;width:18px;height:3px;background:#fff;border-radius:1.5px;"></div>
<div style="position:absolute;left:6px;top:12px;width:18px;height:3px;background:#fff;border-radius:1.5px;"></div>
<div style="position:absolute;left:6px;top:18px;width:18px;height:3px;background:#fff;border-radius:1.5px;"></div>
<div class="t" style="left:57.73px;top:9.76px;font-size:14.5px;font-weight:400;transform:scaleX(1.0940);line-height:14.5px;color:#ccd6dc;text-stroke:0;">QA9 &gt; Publish &gt; Large Article Images</div>
<svg style="position:absolute;left:1330px;top:4px" width="30" height="24" viewBox="0 0 30 24">
<rect x="3.6" y="4.3" width="21.8" height="15.2" fill="none" stroke="#d0dae0" stroke-width="1.2"/>
<rect x="3" y="3.6" width="23" height="4.2" fill="#d0dae0"/>
<path d="M11 16.2 L14.4 12 L17.8 16.2 Z" fill="#d0dae0"/>
</svg>
<svg style="position:absolute;left:1380px;top:4px" width="30" height="24" viewBox="0 0 30 24">
<rect x="3.6" y="4.3" width="21.8" height="15.2" fill="none" stroke="#d0dae0" stroke-width="1.2"/>
<path d="M7.8 8.6 L11.6 12 L7.8 15.2 Z" fill="#d0dae0"/>
<path d="M21.1 8.6 L17.3 12 L21.1 15.2 Z" fill="#d0dae0"/>
</svg>
<svg style="position:absolute;left:1430px;top:0px" width="32" height="32" viewBox="0 0 32 32">
<path d="M15.8 5.4 L18.6 12.5 L26.6 12.6 L20.3 17.9 L22.5 26.4 L15.8 21.8 L9.1 26.4 L11.3 17.9 L5 12.6 L13 12.5 Z" fill="none" stroke="#d0dae0" stroke-width="1.7" stroke-linejoin="miter"/>
</svg>
<svg style="position:absolute;left:1484px;top:0px" width="32" height="32" viewBox="0 0 32 32">
<rect x="6.4" y="8" width="16.8" height="16.2" rx="3.5" fill="#d0dae0"/>
<g stroke="#d0dae0" stroke-width="1.6" stroke-linecap="round">
<line x1="10.8" y1="5.5" x2="10.8" y2="8.5"/><line x1="14.8" y1="4.6" x2="14.8" y2="8.5"/><line x1="18.8" y1="5.5" x2="18.8" y2="8.5"/>
<line x1="10.8" y1="24" x2="10.8" y2="26.5"/><line x1="14.8" y1="24" x2="14.8" y2="27.4"/><line x1="18.8" y1="24" x2="18.8" y2="26.5"/>
<line x1="3.8" y1="12.6" x2="6.6" y2="12.6"/><line x1="3" y1="16.2" x2="6.6" y2="16.2"/><line x1="3.8" y1="19.8" x2="6.6" y2="19.8"/>
<line x1="23" y1="12.6" x2="25.8" y2="12.6"/><line x1="23" y1="16.2" x2="26.6" y2="16.2"/><line x1="23" y1="19.8" x2="25.8" y2="19.8"/>
</g>
<path d="M8.9 20.8 V13.2 Q8.9 11.7 10.4 11.7 H15.1 Q16.6 11.7 16.6 13.2 V20.8 H14.6 V18.4 H10.9 V20.8 Z M10.9 14.2 V16.2 H14.6 V14.2 Z" fill="#436f87"/>
<rect x="18.3" y="11.7" width="2" height="9.1" fill="#436f87"/>
</svg>
<div style="position:absolute;left:234px;top:57px;width:1054px;height:29px;background:#f6f8f8;border:1px solid #bbced8;"></div>
<div class="t" style="left:246.95px;top:66.14px;font-size:13.5px;font-weight:700;transform:scaleX(1.1655);line-height:13.5px;color:#000;-webkit-text-stroke:0.3px #000;">Help</div>
<div class="t" style="left:1205.93px;top:66.14px;font-size:13.5px;font-weight:700;transform:scaleX(1.1915);line-height:13.5px;color:#000;-webkit-text-stroke:0.3px #000;">Expand</div>
<svg style="position:absolute;left:1267px;top:70px" width="11" height="7" viewBox="0 0 11 7"><path d="M1 0.8 H10 L5.5 5.8 Z" fill="#000"/></svg>
<div class="t" style="left:233.68px;top:114.87px;font-size:16.3px;font-weight:700;transform:scaleX(1.1962);line-height:16.3px;color:#000;-webkit-text-stroke:0.3px #000;">Large Article Images</div>
<div style="position:absolute;left:234px;top:145px;width:137px;height:39px;background:#fff;border:1px solid #d4d4d4;"></div>
<div class="t" style="left:243.69px;top:156.12px;font-size:17.5px;font-weight:400;transform:scaleX(1.0082);line-height:17.5px;color:#8c8c8c;text-stroke:0;">Min File Size</div>
<svg style="position:absolute;left:349px;top:157px" width="15" height="15" viewBox="0 0 15 15"><rect x="0" y="0" width="15" height="15" rx="2.4" fill="#647f97"/><path d="M4.4 4.4 L10.6 10.6 M10.6 4.4 L4.4 10.6" stroke="#fff" stroke-width="2.7" stroke-linecap="round"/></svg>
<div style="position:absolute;left:380px;top:145px;width:128px;height:39px;background:#fff;border:1px solid #d4d4d4;"></div>
<div class="t" style="left:389.59px;top:156.12px;font-size:17.5px;font-weight:400;transform:scaleX(1.0056);line-height:17.5px;color:#8c8c8c;text-stroke:0;">Image Field</div>
<svg style="position:absolute;left:486px;top:157px" width="15" height="15" viewBox="0 0 15 15"><rect x="0" y="0" width="15" height="15" rx="2.4" fill="#647f97"/><path d="M4.4 4.4 L10.6 10.6 M10.6 4.4 L4.4 10.6" stroke="#fff" stroke-width="2.7" stroke-linecap="round"/></svg>
<div style="position:absolute;left:234px;top:205px;width:1054px;height:225px;background:#fff;border:1px solid #b9ccd5;"></div>
<div style="position:absolute;left:235px;top:235px;width:1054px;height:1px;background:#b9ccd5;"></div>
<div style="position:absolute;left:235px;top:236px;width:1054px;height:40px;background:#f6f8f8;"></div>
<div style="position:absolute;left:235px;top:312px;width:1054px;height:1px;background:#b9ccd5;"></div>
<div style="position:absolute;left:235px;top:313px;width:1054px;height:40px;background:#f6f8f8;"></div>
<div style="position:absolute;left:235px;top:389px;width:1054px;height:1px;background:#b9ccd5;"></div>
<div style="position:absolute;left:235px;top:390px;width:1054px;height:41px;background:#f6f8f8;"></div>
<div class="t" style="left:240.10px;top:214.44px;font-size:13.5px;font-weight:700;transform:scaleX(1.2186);line-height:13.5px;color:#000;-webkit-text-stroke:0.3px #000;">File Min Size [KB]</div>
<div class="t" style="left:451.55px;top:214.44px;font-size:13.5px;font-weight:700;transform:scaleX(1.2801);line-height:13.5px;color:#000;-webkit-text-stroke:0.3px #000;">Image Min Width [px]</div>
<div class="t" style="left:662.46px;top:214.44px;font-size:13.5px;font-weight:700;transform:scaleX(1.2633);line-height:13.5px;color:#000;-webkit-text-stroke:0.3px #000;">Image Min Height [px]</div>
<div class="t" style="left:873.86px;top:214.44px;font-size:13.5px;font-weight:700;transform:scaleX(1.2681);line-height:13.5px;color:#000;-webkit-text-stroke:0.3px #000;">Image Type</div>
<div class="t" style="left:241.28px;top:290.64px;font-size:13.5px;font-weight:700;transform:scaleX(1.1889);line-height:13.5px;color:#000;-webkit-text-stroke:0.3px #000;">Title</div>
<div class="t" style="left:451.81px;top:290.64px;font-size:13.5px;font-weight:700;transform:scaleX(1.2261);line-height:13.5px;color:#000;-webkit-text-stroke:0.3px #000;">Zone</div>
<div class="t" style="left:663.00px;top:290.64px;font-size:13.5px;font-weight:700;transform:scaleX(1.2008);line-height:13.5px;color:#000;-webkit-text-stroke:0.3px #000;">Channel</div>
<div class="t" style="left:873.93px;top:290.64px;font-size:13.5px;font-weight:700;transform:scaleX(1.1832);line-height:13.5px;color:#000;-webkit-text-stroke:0.3px #000;">Section</div>
<div class="t" style="left:1085.03px;top:290.64px;font-size:13.5px;font-weight:700;transform:scaleX(1.1746);line-height:13.5px;color:#000;-webkit-text-stroke:0.3px #000;">Style</div>
<div class="t" style="left:240.33px;top:367.84px;font-size:13.5px;font-weight:700;transform:scaleX(1.1864);line-height:13.5px;color:#000;-webkit-text-stroke:0.3px #000;">Published From</div>
<div class="t" style="left:504.76px;top:367.84px;font-size:13.5px;font-weight:700;transform:scaleX(1.1556);line-height:13.5px;color:#000;-webkit-text-stroke:0.3px #000;">Live</div>
<div class="t" style="left:768.35px;top:367.84px;font-size:13.5px;font-weight:700;transform:scaleX(1.1749);line-height:13.5px;color:#000;-webkit-text-stroke:0.3px #000;">Archived</div>
<div style="position:absolute;left:241px;top:243px;width:148px;height:26px;background:#fff;border:1px solid #b7cad4;"></div>
<div class="t" style="left:246.43px;top:250.11px;font-size:14.5px;font-weight:400;transform:scaleX(1.1472);line-height:14.5px;color:#000;text-stroke:0;">300</div>
<div style="position:absolute;left:452px;top:243px;width:148px;height:26px;background:#fff;border:1px solid #b7cad4;"></div>
<div style="position:absolute;left:663px;top:243px;width:148px;height:26px;background:#fff;border:1px solid #b7cad4;"></div>
<div style="position:absolute;left:874px;top:243px;width:148px;height:26px;background:#e9e9ed;border:1px solid #b7cad4;"></div>
<div class="t" style="left:873.39px;top:249.67px;font-size:14px;font-weight:400;transform:scaleX(1.1007);line-height:14px;color:#000;text-stroke:0;">Main Image</div>
<svg style="position:absolute;left:1006px;top:253px" width="10" height="8" viewBox="0 0 10 8"><path d="M2.1 1.7 L5.6 5.1 L9.1 1.7" fill="none" stroke="#000" stroke-width="1.3"/></svg>
<div style="position:absolute;left:241px;top:320px;width:148px;height:26px;background:#fff;border:1px solid #b7cad4;"></div>
<div style="position:absolute;left:452px;top:320px;width:148px;height:26px;background:#e9e9ed;border:1px solid #b7cad4;"></div>
<div class="t" style="left:452.60px;top:326.67px;font-size:14px;font-weight:400;transform:scaleX(1.1037);line-height:14px;color:#000;text-stroke:0;">Any</div>
<svg style="position:absolute;left:584px;top:330px" width="10" height="8" viewBox="0 0 10 8"><path d="M2.1 1.7 L5.6 5.1 L9.1 1.7" fill="none" stroke="#000" stroke-width="1.3"/></svg>
<div style="position:absolute;left:663px;top:320px;width:148px;height:26px;background:#fff;border:1px solid #b7cad4;"></div>
<div style="position:absolute;left:874px;top:320px;width:148px;height:26px;background:#fff;border:1px solid #b7cad4;"></div>
<div style="position:absolute;left:1085px;top:320px;width:148px;height:26px;background:#e9e9ed;border:1px solid #b7cad4;"></div>
<div class="t" style="left:1085.60px;top:326.67px;font-size:14px;font-weight:400;transform:scaleX(1.1037);line-height:14px;color:#000;text-stroke:0;">Any</div>
<svg style="position:absolute;left:1217px;top:330px" width="10" height="8" viewBox="0 0 10 8"><path d="M2.1 1.7 L5.6 5.1 L9.1 1.7" fill="none" stroke="#000" stroke-width="1.3"/></svg>
<div style="position:absolute;left:241px;top:397px;width:148px;height:26px;background:#fff;border:1px solid #b7cad4;"></div>
<svg style="position:absolute;left:374px;top:403px" width="15" height="15" viewBox="0 0 15 15"><rect x="0" y="0" width="15" height="15" rx="2.4" fill="#6a8199"/><path d="M4.4 4.4 L10.6 10.6 M10.6 4.4 L4.4 10.6" stroke="#fff" stroke-width="2.7" stroke-linecap="round"/></svg>
<svg style="position:absolute;left:396px;top:403px" width="23" height="15" viewBox="0 0 23 15"><rect x="0.6" y="0.6" width="21.8" height="13.8" fill="#d5dfe2" stroke="#2b3744" stroke-width="1.3"/><rect x="1.25" y="1.25" width="20.5" height="2.4" fill="#fff"/><rect x="1" y="3.6" width="21" height="1.3" fill="#2b3744"/><ellipse cx="3.9" cy="6.7" rx="1.05" ry="0.75" fill="#707070"/><ellipse cx="7.7" cy="6.7" rx="1.05" ry="0.75" fill="#707070"/><ellipse cx="11.6" cy="6.7" rx="1.05" ry="0.75" fill="#707070"/><ellipse cx="15.4" cy="6.7" rx="1.05" ry="0.75" fill="#707070"/><ellipse cx="19.3" cy="6.7" rx="1.05" ry="0.75" fill="#f0a070"/><ellipse cx="3.9" cy="9.4" rx="1.05" ry="0.75" fill="#34404c"/><ellipse cx="7.7" cy="9.4" rx="1.05" ry="0.75" fill="#34404c"/><ellipse cx="11.6" cy="9.4" rx="1.05" ry="0.75" fill="#34404c"/><ellipse cx="15.4" cy="9.4" rx="1.05" ry="0.75" fill="#34404c"/><ellipse cx="19.3" cy="9.4" rx="1.05" ry="0.75" fill="#e8602a"/><ellipse cx="3.9" cy="11.9" rx="1.05" ry="0.75" fill="#707070"/><ellipse cx="7.7" cy="11.9" rx="1.05" ry="0.75" fill="#707070"/><ellipse cx="11.6" cy="11.9" rx="1.05" ry="0.75" fill="#707070"/><ellipse cx="15.4" cy="11.9" rx="1.05" ry="0.75" fill="#707070"/><ellipse cx="19.3" cy="11.9" rx="1.05" ry="0.75" fill="#f0a070"/></svg>
<div style="position:absolute;left:510px;top:402px;width:12.6px;height:12.6px;background:#fff;border:2px solid #858594;border-radius:3px;"></div>
<div style="position:absolute;left:773px;top:402px;width:12.6px;height:12.6px;background:#fff;border:2px solid #858594;border-radius:3px;"></div>
<div style="position:absolute;left:1225px;top:397px;width:58px;height:27px;background:#d0d6df;border-radius:3px;"></div>
<div class="t" style="left:1229.74px;top:403.97px;font-size:14px;font-weight:400;transform:scaleX(1.0888);line-height:14px;color:#000;text-stroke:0;">Search</div>
<div style="position:absolute;left:13px;top:447px;width:1499px;height:45px;background:#c5d0d7;border-radius:4px;"></div>
<div class="t" style="left:24.60px;top:461.70px;font-size:18.4px;font-weight:700;transform:scaleX(1.1699);line-height:18.4px;color:#000;-webkit-text-stroke:0.3px #000;">Image Type: Main Image - Articles 1-50 of 52</div>
<div class="t" style="left:19.88px;top:503.14px;font-size:13.5px;font-weight:700;transform:scaleX(1.2479);line-height:13.5px;color:#000;-webkit-text-stroke:0.3px #000;">Main Image</div>
<div class="t" style="left:130.06px;top:503.14px;font-size:13.5px;font-weight:700;transform:scaleX(1.1537);line-height:13.5px;color:#000;-webkit-text-stroke:0.3px #000;">File Size</div>
<div class="t" style="left:221.80px;top:503.14px;font-size:13.5px;font-weight:700;transform:scaleX(1.2219);line-height:13.5px;color:#000;-webkit-text-stroke:0.3px #000;">Width</div>
<div class="t" style="left:282.02px;top:503.14px;font-size:13.5px;font-weight:700;transform:scaleX(1.1980);line-height:13.5px;color:#000;-webkit-text-stroke:0.3px #000;">Height</div>
<div class="t" style="left:346.93px;top:503.14px;font-size:13.5px;font-weight:700;transform:scaleX(1.1853);line-height:13.5px;color:#000;-webkit-text-stroke:0.3px #000;">File Path</div>
<div class="t" style="left:826.07px;top:503.14px;font-size:13.5px;font-weight:700;transform:scaleX(1.2570);line-height:13.5px;color:#000;-webkit-text-stroke:0.3px #000;">Media Item</div>
<div class="t" style="left:928.34px;top:503.14px;font-size:13.5px;font-weight:700;transform:scaleX(1.1860);line-height:13.5px;color:#000;-webkit-text-stroke:0.3px #000;">Article Title</div>
<div class="t" style="left:1141.23px;top:503.14px;font-size:13.5px;font-weight:700;transform:scaleX(1.1832);line-height:13.5px;color:#000;-webkit-text-stroke:0.3px #000;">Section</div>
<div class="t" style="left:1249.36px;top:503.14px;font-size:13.5px;font-weight:700;transform:scaleX(1.1556);line-height:13.5px;color:#000;-webkit-text-stroke:0.3px #000;">Live</div>
<div class="t" style="left:1295.60px;top:503.14px;font-size:13.5px;font-weight:700;transform:scaleX(1.2023);line-height:13.5px;color:#000;-webkit-text-stroke:0.3px #000;">Created By</div>
<div class="t" style="left:1405.04px;top:503.14px;font-size:13.5px;font-weight:700;transform:scaleX(1.1736);line-height:13.5px;color:#000;-webkit-text-stroke:0.3px #000;">Published</div>
<svg style="position:absolute;left:196px;top:505px" width="11" height="7" viewBox="0 0 11 7"><path d="M1 0.8 H10 L5.5 5.8 Z" fill="#000"/></svg>
<div style="position:absolute;left:13px;top:525px;width:1499px;height:106px;background:#f6f8f8;"></div>
<div style="position:absolute;left:30px;top:539px;width:75px;height:75px;overflow:hidden"><svg width="75" height="75" viewBox="0 0 75 75" style="position:absolute;left:0;top:0"><defs><filter id="bl" x="-5%" y="-5%" width="110%" height="110%"><feGaussianBlur stdDeviation="0.5"/></filter></defs><g filter="url(#bl)"><rect x="-2" y="-2" width="79" height="79" fill="#dedede"/><rect x="-2" y="-2" width="79" height="4.6" fill="#555"/><rect y="2.6" width="75" height="9" fill="#e6e6e6"/><rect y="11.2" width="75" height="2.2" fill="#b4b4b4"/><rect x="0" y="13.4" width="5" height="43" fill="#d4d4d4"/><rect x="10" y="13.4" width="6" height="43" fill="#e9e9e9"/><rect x="45" y="13.4" width="6" height="43" fill="#ececec"/><rect x="64" y="13.4" width="8" height="43" fill="#ececec"/><rect x="73.3" y="15" width="3" height="47" fill="#222"/><rect x="26.2" y="14.5" width="12.6" height="2.3" fill="#f4f4f4"/><rect x="26.2" y="16.8" width="12.6" height="21" fill="#2a201d"/><rect x="52" y="21" width="9" height="15" fill="#3b2a22"/><circle cx="21.5" cy="17.8" r="2" fill="#fff4d6"/><circle cx="43.5" cy="17.8" r="2" fill="#fff4d6"/><rect x="-2" y="55.6" width="79" height="5.6" fill="#232326"/><rect x="-2" y="61" width="79" height="16" fill="#4a3f3f"/><rect x="-2" y="68" width="79" height="9" fill="#574a47"/><rect x="32.7" y="29.5" width="6" height="28.5" rx="1.4" fill="#26262c"/><rect x="33.5" y="58" width="4.4" height="10.5" fill="#17151a"/><ellipse cx="35.7" cy="27" rx="1.9" ry="2.2" fill="#c7a08a"/><rect x="33.800000000000004" y="24.6" width="3.8" height="1.5" fill="#3a2c24"/><rect x="13.8" y="31.5" width="6" height="26.5" rx="1.4" fill="#eceef2"/><rect x="14.600000000000001" y="58" width="4.4" height="10.5" fill="#17151a"/><ellipse cx="16.8" cy="29" rx="1.9" ry="2.2" fill="#c7a08a"/><rect x="14.9" y="26.6" width="3.8" height="1.5" fill="#3a2c24"/><rect x="21.1" y="36.5" width="6" height="21.5" rx="1.4" fill="#eceef2"/><rect x="21.900000000000002" y="58" width="4.4" height="10.5" fill="#17151a"/><ellipse cx="24.1" cy="34" rx="1.9" ry="2.2" fill="#c7a08a"/><rect x="22.200000000000003" y="31.6" width="3.8" height="1.5" fill="#3a2c24"/><rect x="28.5" y="29.0" width="6" height="29.0" rx="1.4" fill="#eceef2"/><rect x="29.3" y="58" width="4.4" height="10.5" fill="#17151a"/><ellipse cx="31.5" cy="26.5" rx="1.9" ry="2.2" fill="#c7a08a"/><rect x="29.6" y="24.1" width="3.8" height="1.5" fill="#3a2c24"/><rect x="36.4" y="32.5" width="6" height="25.5" rx="1.4" fill="#eceef2"/><rect x="37.199999999999996" y="58" width="4.4" height="10.5" fill="#17151a"/><ellipse cx="39.4" cy="30" rx="1.9" ry="2.2" fill="#c7a08a"/><rect x="37.5" y="27.6" width="3.8" height="1.5" fill="#3a2c24"/><rect x="40.6" y="31.5" width="6" height="26.5" rx="1.4" fill="#26262c"/><rect x="41.4" y="58" width="4.4" height="10.5" fill="#17151a"/><ellipse cx="43.6" cy="29" rx="1.9" ry="2.2" fill="#c7a08a"/><rect x="41.7" y="26.6" width="3.8" height="1.5" fill="#3a2c24"/><rect x="44.8" y="30.5" width="6" height="27.5" rx="1.4" fill="#eceef2"/><rect x="45.599999999999994" y="58" width="4.4" height="10.5" fill="#17151a"/><ellipse cx="47.8" cy="28" rx="1.9" ry="2.2" fill="#c7a08a"/><rect x="45.9" y="25.6" width="3.8" height="1.5" fill="#3a2c24"/><rect x="50" y="33.5" width="6" height="24.5" rx="1.4" fill="#26262c"/><rect x="50.8" y="58" width="4.4" height="10.5" fill="#17151a"/><ellipse cx="53" cy="31" rx="1.9" ry="2.2" fill="#c7a08a"/><rect x="51.1" y="28.6" width="3.8" height="1.5" fill="#3a2c24"/><rect x="57.3" y="32.5" width="6" height="25.5" rx="1.4" fill="#eceef2"/><rect x="58.099999999999994" y="58" width="4.4" height="10.5" fill="#17151a"/><ellipse cx="60.3" cy="30" rx="1.9" ry="2.2" fill="#c7a08a"/><rect x="58.4" y="27.6" width="3.8" height="1.5" fill="#3a2c24"/></g></svg></div>
<div class="t" style="left:133.74px;top:571.61px;font-size:14.5px;font-weight:400;transform:scaleX(1.0854);line-height:14.5px;color:#000;text-stroke:0;">2.6 MB</div>
<div class="t" style="left:224.78px;top:571.61px;font-size:14.5px;font-weight:400;transform:scaleX(1.1111);line-height:14.5px;color:#000;text-stroke:0;">1200</div>
<div class="t" style="left:285.33px;top:571.61px;font-size:14.5px;font-weight:400;transform:scaleX(1.1217);line-height:14.5px;color:#000;text-stroke:0;">800</div>
<div class="t" style="left:351.20px;top:571.61px;font-size:14.5px;font-weight:400;transform:scaleX(1.1154);line-height:14.5px;color:#000;text-stroke:0;">/AcuCustom/Sitename/DAM/001/wtpi214443.jpg</div>
<div style="position:absolute;left:824px;top:564px;width:85px;height:27px;background:#e2e5ea;border-radius:3px;"></div>
<div class="t" style="left:827.77px;top:569.87px;font-size:14px;font-weight:400;transform:scaleX(1.1161);line-height:14px;color:#333;text-stroke:0;">Media Item</div>
<div class="t" style="left:932.38px;top:546.24px;font-size:13.5px;font-weight:700;transform:scaleX(1.1939);line-height:13.5px;color:#000;-webkit-text-stroke:0.3px #000;">Team behind Michelin-</div>
<div class="t" style="left:931.89px;top:563.24px;font-size:13.5px;font-weight:700;transform:scaleX(1.2222);line-height:13.5px;color:#000;-webkit-text-stroke:0.3px #000;">starred Timberyard</div>
<div class="t" style="left:931.44px;top:580.24px;font-size:13.5px;font-weight:700;transform:scaleX(1.1763);line-height:13.5px;color:#000;-webkit-text-stroke:0.3px #000;">launches second</div>
<div class="t" style="left:931.39px;top:597.24px;font-size:13.5px;font-weight:700;transform:scaleX(1.2357);line-height:13.5px;color:#000;-webkit-text-stroke:0.3px #000;">restaurant</div>
<div style="position:absolute;left:1145px;top:555px;width:85px;height:44px;background:#e2e5ea;border-radius:3px;"></div>
<div class="t" style="left:1149.68px;top:562.11px;font-size:14.5px;font-weight:400;transform:scaleX(1.0800);line-height:14.5px;color:#333;text-stroke:0;">The</div>
<div class="t" style="left:1149.26px;top:579.11px;font-size:14.5px;font-weight:400;transform:scaleX(1.0633);line-height:14.5px;color:#333;text-stroke:0;">Caterer</div>
<svg style="position:absolute;left:1251px;top:569.5px" width="18" height="14" viewBox="0 0 18 14"><path d="M2.3 6.3 L6.5 9.5 L15.3 1.3 L16.5 2.6 L6.6 12.2 L1.3 7.6 Z" fill="#000"/></svg>
<div style="position:absolute;left:1299px;top:555px;width:87px;height:44px;background:#e2e5ea;border-radius:3px;"></div>
<div class="t" style="left:1303.26px;top:562.11px;font-size:14.5px;font-weight:400;transform:scaleX(1.0573);line-height:14.5px;color:#333;text-stroke:0;">Quang</div>
<div class="t" style="left:1302.68px;top:579.11px;font-size:14.5px;font-weight:400;transform:scaleX(1.1021);line-height:14.5px;color:#333;text-stroke:0;">Luong</div>
<div class="t" style="left:1407.73px;top:571.61px;font-size:14.5px;font-weight:400;transform:scaleX(1.0940);line-height:14.5px;color:#000;text-stroke:0;">23 Jan 2024</div>
<div style="position:absolute;left:13px;top:631px;width:1499px;height:105px;background:#fff;"></div>
<div style="position:absolute;left:30px;top:645px;width:75px;height:75px;overflow:hidden"><svg width="75" height="75" viewBox="0 0 75 75"><use href="#leo"/></svg></div>
<div class="t" style="left:133.75px;top:677.11px;font-size:14.5px;font-weight:400;transform:scaleX(1.0764);line-height:14.5px;color:#000;text-stroke:0;">2.3 MB</div>
<div class="t" style="left:224.78px;top:677.11px;font-size:14.5px;font-weight:400;transform:scaleX(1.1111);line-height:14.5px;color:#000;text-stroke:0;">1200</div>
<div class="t" style="left:285.48px;top:677.11px;font-size:14.5px;font-weight:400;transform:scaleX(1.1111);line-height:14.5px;color:#000;text-stroke:0;">1200</div>
<div class="t" style="left:351.20px;top:668.61px;font-size:14.5px;font-weight:400;transform:scaleX(1.1039);line-height:14.5px;color:#000;text-stroke:0;">/AcuCustom/Sitename/DAM/001/</div>
<div class="t" style="left:351.64px;top:685.61px;font-size:14.5px;font-weight:400;transform:scaleX(1.0950);line-height:14.5px;color:#000;text-stroke:0;">jaguar_2etz6n1l07l2_Main.png</div>
<div style="position:absolute;left:824px;top:669px;width:85px;height:27px;background:#e2e5ea;border-radius:3px;"></div>
<div class="t" style="left:827.77px;top:675.37px;font-size:14px;font-weight:400;transform:scaleX(1.1161);line-height:14px;color:#333;text-stroke:0;">Media Item</div>
<div class="t" style="left:932.03px;top:677.24px;font-size:13.5px;font-weight:700;transform:scaleX(1.1758);line-height:13.5px;color:#000;-webkit-text-stroke:0.3px #000;">Simple Event</div>
<div style="position:absolute;left:1145px;top:669px;width:56px;height:27px;background:#e2e5ea;border-radius:3px;"></div>
<div class="t" style="left:1148.68px;top:676.11px;font-size:14.5px;font-weight:400;transform:scaleX(1.0962);line-height:14.5px;color:#333;text-stroke:0;">Events</div>
<svg style="position:absolute;left:1251px;top:675.0px" width="17" height="16" viewBox="0 0 17 16"><path d="M3 2.9 L14.3 13.3 M14.3 2.9 L3 13.3" fill="none" stroke="#000" stroke-width="2.1"/></svg>
<div style="position:absolute;left:1299px;top:661px;width:87px;height:44px;background:#e2e5ea;border-radius:3px;"></div>
<div class="t" style="left:1303.23px;top:667.61px;font-size:14.5px;font-weight:400;transform:scaleX(1.0998);line-height:14.5px;color:#333;text-stroke:0;">Quang O'</div>
<div class="t" style="left:1302.68px;top:684.61px;font-size:14.5px;font-weight:400;transform:scaleX(1.1021);line-height:14.5px;color:#333;text-stroke:0;">Luong</div>
<div class="t" style="left:1407.84px;top:677.11px;font-size:14.5px;font-weight:400;transform:scaleX(1.0922);line-height:14.5px;color:#000;text-stroke:0;">06 Mar 2024</div>
<div style="position:absolute;left:13px;top:736px;width:1499px;height:106px;background:#f6f8f8;"></div>
<div style="position:absolute;left:30px;top:750px;width:75px;height:75px;overflow:hidden"><svg width="75" height="75" viewBox="0 0 75 75"><use href="#leo"/></svg></div>
<div class="t" style="left:133.75px;top:782.61px;font-size:14.5px;font-weight:400;transform:scaleX(1.0764);line-height:14.5px;color:#000;text-stroke:0;">2.3 MB</div>
<div class="t" style="left:224.78px;top:782.61px;font-size:14.5px;font-weight:400;transform:scaleX(1.1111);line-height:14.5px;color:#000;text-stroke:0;">1200</div>
<div class="t" style="left:285.48px;top:782.61px;font-size:14.5px;font-weight:400;transform:scaleX(1.1111);line-height:14.5px;color:#000;text-stroke:0;">1200</div>
<div class="t" style="left:351.20px;top:782.61px;font-size:14.5px;font-weight:400;transform:scaleX(1.1169);line-height:14.5px;color:#000;text-stroke:0;">/AcuCustom/Sitename/DAM/001/jaguar_1x3z3xge6q8j8.png</div>
<div style="position:absolute;left:824px;top:775px;width:85px;height:27px;background:#e2e5ea;border-radius:3px;"></div>
<div class="t" style="left:827.77px;top:780.87px;font-size:14px;font-weight:400;transform:scaleX(1.1161);line-height:14px;color:#333;text-stroke:0;">Media Item</div>
<div class="t" style="left:932.26px;top:782.74px;font-size:13.5px;font-weight:700;transform:scaleX(1.2119);line-height:13.5px;color:#000;-webkit-text-stroke:0.3px #000;">test</div>
<div style="position:absolute;left:1145px;top:766px;width:85px;height:44px;background:#e2e5ea;border-radius:3px;"></div>
<div class="t" style="left:1148.75px;top:773.11px;font-size:14.5px;font-weight:400;transform:scaleX(1.0383);line-height:14.5px;color:#333;text-stroke:0;">Basic</div>
<div class="t" style="left:1150.00px;top:790.11px;font-size:14.5px;font-weight:400;transform:scaleX(1.0553);line-height:14.5px;color:#333;text-stroke:0;">Articles</div>
<svg style="position:absolute;left:1251px;top:780.5px" width="17" height="16" viewBox="0 0 17 16"><path d="M3 2.9 L14.3 13.3 M14.3 2.9 L3 13.3" fill="none" stroke="#000" stroke-width="2.1"/></svg>
<div style="position:absolute;left:1299px;top:766px;width:87px;height:44px;background:#e2e5ea;border-radius:3px;"></div>
<div class="t" style="left:1303.23px;top:773.11px;font-size:14.5px;font-weight:400;transform:scaleX(1.0998);line-height:14.5px;color:#333;text-stroke:0;">Quang O'</div>
<div class="t" style="left:1302.68px;top:790.11px;font-size:14.5px;font-weight:400;transform:scaleX(1.1021);line-height:14.5px;color:#333;text-stroke:0;">Luong</div>
<div class="t" style="left:1407.29px;top:782.61px;font-size:14.5px;font-weight:400;transform:scaleX(1.0958);line-height:14.5px;color:#000;text-stroke:0;">18 Jan 2024</div>
<div style="position:absolute;left:13px;top:842px;width:1499px;height:105px;background:#fff;"></div>
<div style="position:absolute;left:30px;top:856px;width:75px;height:75px;overflow:hidden"><svg width="75" height="75" viewBox="0 0 75 75"><use href="#leo"/></svg></div>
<div class="t" style="left:133.75px;top:888.11px;font-size:14.5px;font-weight:400;transform:scaleX(1.0764);line-height:14.5px;color:#000;text-stroke:0;">2.3 MB</div>
<div class="t" style="left:224.78px;top:888.11px;font-size:14.5px;font-weight:400;transform:scaleX(1.1111);line-height:14.5px;color:#000;text-stroke:0;">1200</div>
<div class="t" style="left:285.48px;top:888.11px;font-size:14.5px;font-weight:400;transform:scaleX(1.1111);line-height:14.5px;color:#000;text-stroke:0;">1200</div>
<div class="t" style="left:351.20px;top:879.61px;font-size:14.5px;font-weight:400;transform:scaleX(1.1039);line-height:14.5px;color:#000;text-stroke:0;">/AcuCustom/Sitename/DAM/001/</div>
<div class="t" style="left:351.64px;top:896.61px;font-size:14.5px;font-weight:400;transform:scaleX(1.1107);line-height:14.5px;color:#000;text-stroke:0;">jaguar_1x3z3xge6q8j8_Main.png</div>
<div style="position:absolute;left:824px;top:880px;width:85px;height:27px;background:#e2e5ea;border-radius:3px;"></div>
<div class="t" style="left:827.77px;top:886.37px;font-size:14px;font-weight:400;transform:scaleX(1.1161);line-height:14px;color:#333;text-stroke:0;">Media Item</div>
<div class="t" style="left:932.38px;top:888.24px;font-size:13.5px;font-weight:700;transform:scaleX(1.2261);line-height:13.5px;color:#000;-webkit-text-stroke:0.3px #000;">Test Article 2</div>
<div style="position:absolute;left:1145px;top:872px;width:85px;height:44px;background:#e2e5ea;border-radius:3px;"></div>
<div class="t" style="left:1149.27px;top:878.61px;font-size:14.5px;font-weight:400;transform:scaleX(1.0419);line-height:14.5px;color:#333;text-stroke:0;">Simple</div>
<div class="t" style="left:1150.00px;top:895.61px;font-size:14.5px;font-weight:400;transform:scaleX(1.0553);line-height:14.5px;color:#333;text-stroke:0;">Articles</div>
<svg style="position:absolute;left:1251px;top:886.0px" width="18" height="14" viewBox="0 0 18 14"><path d="M2.3 6.3 L6.5 9.5 L15.3 1.3 L16.5 2.6 L6.6 12.2 L1.3 7.6 Z" fill="#000"/></svg>
<div style="position:absolute;left:1299px;top:872px;width:87px;height:44px;background:#e2e5ea;border-radius:3px;"></div>
<div class="t" style="left:1303.79px;top:878.61px;font-size:14.5px;font-weight:400;transform:scaleX(1.0336);line-height:14.5px;color:#333;text-stroke:0;">Jose</div>
<div class="t" style="left:1303.25px;top:895.61px;font-size:14.5px;font-weight:400;transform:scaleX(1.0696);line-height:14.5px;color:#333;text-stroke:0;">Claramunt</div>
<div class="t" style="left:1407.27px;top:888.11px;font-size:14.5px;font-weight:400;transform:scaleX(1.1171);line-height:14.5px;color:#000;text-stroke:0;">11 Dec 2023</div>
<div style="position:absolute;left:13px;top:947px;width:1499px;height:106px;background:#f6f8f8;"></div>
<div style="position:absolute;left:0px;top:33px;width:28px;height:920px;background:linear-gradient(90deg,rgba(0,0,0,.165) 0,rgba(0,0,0,.11) 6px,rgba(0,0,0,.06) 12px,rgba(0,0,0,.025) 18px,rgba(0,0,0,0) 27px);"></div>
</body></html>
